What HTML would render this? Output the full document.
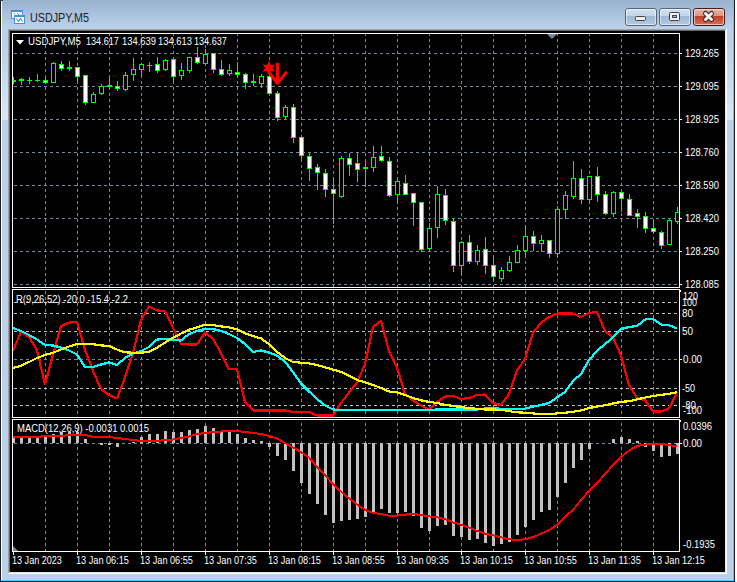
<!DOCTYPE html><html><head><meta charset="utf-8"><title>USDJPY,M5</title><style>html,body{margin:0;padding:0;background:#fff;width:737px;height:582px;overflow:hidden;font-family:"Liberation Sans",sans-serif}</style></head><body><svg width="737" height="582" viewBox="0 0 737 582" shape-rendering="crispEdges" style="position:absolute;left:0;top:0"><defs><linearGradient id="tb" x1="0" y1="0" x2="0" y2="1"><stop offset="0" stop-color="#98b1ce"/><stop offset="1" stop-color="#bcd3eb"/></linearGradient><linearGradient id="btnB" x1="0" y1="0" x2="0" y2="1"><stop offset="0" stop-color="#d3e1f1"/><stop offset="0.45" stop-color="#c2d5ea"/><stop offset="0.46" stop-color="#9fb7d2"/><stop offset="1" stop-color="#b5cbe3"/></linearGradient><linearGradient id="btnR" x1="0" y1="0" x2="0" y2="1"><stop offset="0" stop-color="#eab3a6"/><stop offset="0.45" stop-color="#dc9585"/><stop offset="0.46" stop-color="#bd4127"/><stop offset="1" stop-color="#d5735c"/></linearGradient><linearGradient id="refl" x1="0" y1="0" x2="0" y2="1"><stop offset="0" stop-color="#b9d1ea"/><stop offset="1" stop-color="#dbe7f4"/></linearGradient></defs><rect x="0" y="0" width="737" height="582" fill="#ffffff"/><rect x="0" y="0" width="735" height="582" fill="#1f1f1f"/><rect x="1" y="0" width="733" height="581" fill="#ffffff"/><rect x="733" y="0" width="1" height="581" fill="#3fd6f7"/><rect x="1" y="580" width="733" height="1" fill="#3fd6f7"/><rect x="2" y="0" width="731" height="580" fill="#b9d1ea"/><rect x="2" y="0" width="731" height="29" fill="url(#tb)"/><rect x="0" y="0" width="3" height="1" fill="#3a3a3a"/><rect x="2" y="45" width="6" height="75" fill="url(#refl)"/><rect x="727" y="45" width="6" height="75" fill="url(#refl)"/><rect x="8" y="29" width="719" height="545" fill="#ffffff"/><rect x="8" y="29" width="718" height="544" fill="#a0a0a0"/><rect x="9" y="30" width="717" height="543" fill="#e3e3e3"/><rect x="9" y="30" width="716" height="542" fill="#696969"/><rect x="10" y="31" width="715" height="541" fill="#000000"/><g><rect x="12" y="12" width="10" height="6" fill="#fffff4"/><rect x="20" y="11" width="1" height="1" fill="#3f9a86"/><rect x="21" y="10" width="1" height="1" fill="#3f9a86"/><rect x="22" y="11" width="1" height="1" fill="#3f9a86"/><rect x="12" y="10" width="1" height="1" fill="#4d90f5"/><rect x="22" y="14" width="1" height="1" fill="#4d90f5"/><rect x="14" y="10" width="1" height="1" fill="#4d90f5"/><rect x="22" y="17" width="1" height="1" fill="#3f9a86"/><rect x="19" y="18" width="1" height="1" fill="#3f9a86"/><rect x="17" y="18" width="1" height="1" fill="#3f9a86"/><rect x="11" y="14" width="1" height="1" fill="#3f9a86"/><rect x="13" y="11" width="1" height="1" fill="#4d90f5"/><rect x="11" y="11" width="1" height="1" fill="#4d90f5"/><rect x="11" y="17" width="1" height="1" fill="#4d90f5"/><rect x="15" y="11" width="1" height="1" fill="#4d90f5"/><rect x="16" y="10" width="1" height="1" fill="#4d90f5"/><rect x="18" y="10" width="1" height="1" fill="#4d90f5"/><rect x="20" y="10" width="1" height="1" fill="#4d90f5"/><rect x="22" y="13" width="1" height="1" fill="#3f9a86"/><rect x="22" y="10" width="1" height="1" fill="#4d90f5"/><rect x="22" y="16" width="1" height="1" fill="#4d90f5"/><rect x="21" y="18" width="1" height="1" fill="#3f9a86"/><rect x="14" y="18" width="1" height="1" fill="#4d90f5"/><rect x="17" y="11" width="1" height="1" fill="#4d90f5"/><rect x="12" y="18" width="1" height="1" fill="#4d90f5"/><rect x="19" y="11" width="1" height="1" fill="#4d90f5"/><rect x="11" y="10" width="1" height="1" fill="#3f9a86"/><rect x="11" y="16" width="1" height="1" fill="#3f9a86"/><rect x="11" y="13" width="1" height="1" fill="#4d90f5"/><rect x="13" y="10" width="1" height="1" fill="#3f9a86"/><rect x="15" y="10" width="1" height="1" fill="#3f9a86"/><rect x="18" y="18" width="1" height="1" fill="#4d90f5"/><rect x="16" y="18" width="1" height="1" fill="#4d90f5"/><rect x="12" y="11" width="1" height="1" fill="#3f9a86"/><rect x="20" y="18" width="1" height="1" fill="#4d90f5"/><rect x="21" y="11" width="1" height="1" fill="#4d90f5"/><rect x="14" y="11" width="1" height="1" fill="#3f9a86"/><rect x="22" y="18" width="1" height="1" fill="#4d90f5"/><rect x="22" y="12" width="1" height="1" fill="#4d90f5"/><rect x="22" y="15" width="1" height="1" fill="#3f9a86"/><rect x="17" y="10" width="1" height="1" fill="#3f9a86"/><rect x="19" y="10" width="1" height="1" fill="#3f9a86"/><rect x="11" y="12" width="1" height="1" fill="#3f9a86"/><rect x="11" y="15" width="1" height="1" fill="#4d90f5"/><rect x="13" y="18" width="1" height="1" fill="#3f9a86"/><rect x="11" y="18" width="1" height="1" fill="#3f9a86"/><rect x="18" y="11" width="1" height="1" fill="#3f9a86"/><rect x="15" y="18" width="1" height="1" fill="#3f9a86"/><rect x="16" y="11" width="1" height="1" fill="#3f9a86"/><path d="M13.5 14.5l1-1 1 1M17.5 13.5l1 1 1 1" stroke="#4d90f5" stroke-width="1" fill="none"/><rect x="15" y="17" width="9" height="6" fill="#fffff4"/><rect x="18" y="23" width="1" height="1" fill="#3f9a86"/><rect x="21" y="16" width="1" height="1" fill="#3f9a86"/><rect x="23" y="16" width="1" height="1" fill="#3f9a86"/><rect x="20" y="23" width="1" height="1" fill="#3f9a86"/><rect x="14" y="16" width="1" height="1" fill="#4d90f5"/><rect x="22" y="23" width="1" height="1" fill="#3f9a86"/><rect x="14" y="19" width="1" height="1" fill="#3f9a86"/><rect x="17" y="15" width="1" height="1" fill="#4d90f5"/><rect x="14" y="22" width="1" height="1" fill="#4d90f5"/><rect x="19" y="15" width="1" height="1" fill="#4d90f5"/><rect x="16" y="16" width="1" height="1" fill="#4d90f5"/><rect x="24" y="23" width="1" height="1" fill="#3f9a86"/><rect x="24" y="17" width="1" height="1" fill="#3f9a86"/><rect x="24" y="20" width="1" height="1" fill="#4d90f5"/><rect x="18" y="16" width="1" height="1" fill="#4d90f5"/><rect x="15" y="23" width="1" height="1" fill="#4d90f5"/><rect x="20" y="16" width="1" height="1" fill="#4d90f5"/><rect x="21" y="15" width="1" height="1" fill="#4d90f5"/><rect x="22" y="16" width="1" height="1" fill="#4d90f5"/><rect x="23" y="15" width="1" height="1" fill="#4d90f5"/><rect x="14" y="18" width="1" height="1" fill="#4d90f5"/><rect x="14" y="15" width="1" height="1" fill="#3f9a86"/><rect x="14" y="21" width="1" height="1" fill="#3f9a86"/><rect x="17" y="23" width="1" height="1" fill="#4d90f5"/><rect x="19" y="23" width="1" height="1" fill="#4d90f5"/><rect x="24" y="16" width="1" height="1" fill="#4d90f5"/><rect x="24" y="19" width="1" height="1" fill="#3f9a86"/><rect x="15" y="16" width="1" height="1" fill="#3f9a86"/><rect x="16" y="15" width="1" height="1" fill="#3f9a86"/><rect x="24" y="22" width="1" height="1" fill="#4d90f5"/><rect x="15" y="15" width="1" height="1" fill="#4d90f5"/><rect x="18" y="15" width="1" height="1" fill="#3f9a86"/><rect x="20" y="15" width="1" height="1" fill="#3f9a86"/><rect x="21" y="23" width="1" height="1" fill="#4d90f5"/><rect x="22" y="15" width="1" height="1" fill="#3f9a86"/><rect x="23" y="23" width="1" height="1" fill="#4d90f5"/><rect x="14" y="17" width="1" height="1" fill="#3f9a86"/><rect x="14" y="23" width="1" height="1" fill="#3f9a86"/><rect x="17" y="16" width="1" height="1" fill="#3f9a86"/><rect x="14" y="20" width="1" height="1" fill="#4d90f5"/><rect x="19" y="16" width="1" height="1" fill="#3f9a86"/><rect x="24" y="18" width="1" height="1" fill="#4d90f5"/><rect x="24" y="15" width="1" height="1" fill="#3f9a86"/><rect x="24" y="21" width="1" height="1" fill="#3f9a86"/><rect x="16" y="23" width="1" height="1" fill="#3f9a86"/><path d="M16.5 18.5l2 3 2-3 2 3" stroke="#4d90f5" stroke-width="1.2" fill="none" shape-rendering="auto"/></g><text x="30" y="22" font-family="Liberation Sans, sans-serif" font-size="12" fill="#1e1e1e" textLength="59" lengthAdjust="spacingAndGlyphs" shape-rendering="auto">USDJPY,M5</text><rect x="625.5" y="8.5" width="31" height="17" rx="2.5" ry="2.5" fill="url(#btnB)" stroke="#56647a" stroke-width="1" shape-rendering="auto"/><rect x="626.5" y="9.5" width="29" height="15" rx="1.5" ry="1.5" fill="none" stroke="rgba(255,255,255,0.55)" stroke-width="1" shape-rendering="auto"/><rect x="635.5" y="16.5" width="10" height="4" rx="1" fill="#f0f0f0" stroke="#3b4250" shape-rendering="auto"/><rect x="659.5" y="8.5" width="31" height="17" rx="2.5" ry="2.5" fill="url(#btnB)" stroke="#56647a" stroke-width="1" shape-rendering="auto"/><rect x="660.5" y="9.5" width="29" height="15" rx="1.5" ry="1.5" fill="none" stroke="rgba(255,255,255,0.55)" stroke-width="1" shape-rendering="auto"/><rect x="669.5" y="12.5" width="10" height="8" rx="1" fill="#f0f0f0" stroke="#3b4250" shape-rendering="auto"/><rect x="672.5" y="15.5" width="4" height="2" fill="#9fb7d2" stroke="#3b4250" shape-rendering="auto"/><rect x="693.5" y="8.5" width="31" height="17" rx="2.5" ry="2.5" fill="url(#btnR)" stroke="#4b1818" stroke-width="1" shape-rendering="auto"/><rect x="694.5" y="9.5" width="29" height="15" rx="1.5" ry="1.5" fill="none" stroke="rgba(255,255,255,0.55)" stroke-width="1" shape-rendering="auto"/><path d="M705.5 13.5L711.5 19.5M711.5 13.5L705.5 19.5" stroke="#3a2626" stroke-width="5" fill="none" stroke-linecap="round" shape-rendering="auto"/><path d="M705.5 13.5L711.5 19.5M711.5 13.5L705.5 19.5" stroke="#f4f4f4" stroke-width="3" fill="none" stroke-linecap="round" shape-rendering="auto"/><path fill="#778899" d="M14 53h3v1h-3zM20 53h3v1h-3zM26 53h3v1h-3zM32 53h3v1h-3zM38 53h3v1h-3zM44 53h3v1h-3zM50 53h3v1h-3zM56 53h3v1h-3zM62 53h3v1h-3zM68 53h3v1h-3zM74 53h3v1h-3zM80 53h3v1h-3zM86 53h3v1h-3zM92 53h3v1h-3zM98 53h3v1h-3zM104 53h3v1h-3zM110 53h3v1h-3zM116 53h3v1h-3zM122 53h3v1h-3zM128 53h3v1h-3zM134 53h3v1h-3zM140 53h3v1h-3zM146 53h3v1h-3zM152 53h3v1h-3zM158 53h3v1h-3zM164 53h3v1h-3zM170 53h3v1h-3zM176 53h3v1h-3zM182 53h3v1h-3zM188 53h3v1h-3zM194 53h3v1h-3zM200 53h3v1h-3zM206 53h3v1h-3zM212 53h3v1h-3zM218 53h3v1h-3zM224 53h3v1h-3zM230 53h3v1h-3zM236 53h3v1h-3zM242 53h3v1h-3zM248 53h3v1h-3zM254 53h3v1h-3zM260 53h3v1h-3zM266 53h3v1h-3zM272 53h3v1h-3zM278 53h3v1h-3zM284 53h3v1h-3zM290 53h3v1h-3zM296 53h3v1h-3zM302 53h3v1h-3zM308 53h3v1h-3zM314 53h3v1h-3zM320 53h3v1h-3zM326 53h3v1h-3zM332 53h3v1h-3zM338 53h3v1h-3zM344 53h3v1h-3zM350 53h3v1h-3zM356 53h3v1h-3zM362 53h3v1h-3zM368 53h3v1h-3zM374 53h3v1h-3zM380 53h3v1h-3zM386 53h3v1h-3zM392 53h3v1h-3zM398 53h3v1h-3zM404 53h3v1h-3zM410 53h3v1h-3zM416 53h3v1h-3zM422 53h3v1h-3zM428 53h3v1h-3zM434 53h3v1h-3zM440 53h3v1h-3zM446 53h3v1h-3zM452 53h3v1h-3zM458 53h3v1h-3zM464 53h3v1h-3zM470 53h3v1h-3zM476 53h3v1h-3zM482 53h3v1h-3zM488 53h3v1h-3zM494 53h3v1h-3zM500 53h3v1h-3zM506 53h3v1h-3zM512 53h3v1h-3zM518 53h3v1h-3zM524 53h3v1h-3zM530 53h3v1h-3zM536 53h3v1h-3zM542 53h3v1h-3zM548 53h3v1h-3zM554 53h3v1h-3zM560 53h3v1h-3zM566 53h3v1h-3zM572 53h3v1h-3zM578 53h3v1h-3zM584 53h3v1h-3zM590 53h3v1h-3zM596 53h3v1h-3zM602 53h3v1h-3zM608 53h3v1h-3zM614 53h3v1h-3zM620 53h3v1h-3zM626 53h3v1h-3zM632 53h3v1h-3zM638 53h3v1h-3zM644 53h3v1h-3zM650 53h3v1h-3zM656 53h3v1h-3zM662 53h3v1h-3zM668 53h3v1h-3zM674 53h3v1h-3z"/><path fill="#778899" d="M14 86h3v1h-3zM20 86h3v1h-3zM26 86h3v1h-3zM32 86h3v1h-3zM38 86h3v1h-3zM44 86h3v1h-3zM50 86h3v1h-3zM56 86h3v1h-3zM62 86h3v1h-3zM68 86h3v1h-3zM74 86h3v1h-3zM80 86h3v1h-3zM86 86h3v1h-3zM92 86h3v1h-3zM98 86h3v1h-3zM104 86h3v1h-3zM110 86h3v1h-3zM116 86h3v1h-3zM122 86h3v1h-3zM128 86h3v1h-3zM134 86h3v1h-3zM140 86h3v1h-3zM146 86h3v1h-3zM152 86h3v1h-3zM158 86h3v1h-3zM164 86h3v1h-3zM170 86h3v1h-3zM176 86h3v1h-3zM182 86h3v1h-3zM188 86h3v1h-3zM194 86h3v1h-3zM200 86h3v1h-3zM206 86h3v1h-3zM212 86h3v1h-3zM218 86h3v1h-3zM224 86h3v1h-3zM230 86h3v1h-3zM236 86h3v1h-3zM242 86h3v1h-3zM248 86h3v1h-3zM254 86h3v1h-3zM260 86h3v1h-3zM266 86h3v1h-3zM272 86h3v1h-3zM278 86h3v1h-3zM284 86h3v1h-3zM290 86h3v1h-3zM296 86h3v1h-3zM302 86h3v1h-3zM308 86h3v1h-3zM314 86h3v1h-3zM320 86h3v1h-3zM326 86h3v1h-3zM332 86h3v1h-3zM338 86h3v1h-3zM344 86h3v1h-3zM350 86h3v1h-3zM356 86h3v1h-3zM362 86h3v1h-3zM368 86h3v1h-3zM374 86h3v1h-3zM380 86h3v1h-3zM386 86h3v1h-3zM392 86h3v1h-3zM398 86h3v1h-3zM404 86h3v1h-3zM410 86h3v1h-3zM416 86h3v1h-3zM422 86h3v1h-3zM428 86h3v1h-3zM434 86h3v1h-3zM440 86h3v1h-3zM446 86h3v1h-3zM452 86h3v1h-3zM458 86h3v1h-3zM464 86h3v1h-3zM470 86h3v1h-3zM476 86h3v1h-3zM482 86h3v1h-3zM488 86h3v1h-3zM494 86h3v1h-3zM500 86h3v1h-3zM506 86h3v1h-3zM512 86h3v1h-3zM518 86h3v1h-3zM524 86h3v1h-3zM530 86h3v1h-3zM536 86h3v1h-3zM542 86h3v1h-3zM548 86h3v1h-3zM554 86h3v1h-3zM560 86h3v1h-3zM566 86h3v1h-3zM572 86h3v1h-3zM578 86h3v1h-3zM584 86h3v1h-3zM590 86h3v1h-3zM596 86h3v1h-3zM602 86h3v1h-3zM608 86h3v1h-3zM614 86h3v1h-3zM620 86h3v1h-3zM626 86h3v1h-3zM632 86h3v1h-3zM638 86h3v1h-3zM644 86h3v1h-3zM650 86h3v1h-3zM656 86h3v1h-3zM662 86h3v1h-3zM668 86h3v1h-3zM674 86h3v1h-3z"/><path fill="#778899" d="M14 119h3v1h-3zM20 119h3v1h-3zM26 119h3v1h-3zM32 119h3v1h-3zM38 119h3v1h-3zM44 119h3v1h-3zM50 119h3v1h-3zM56 119h3v1h-3zM62 119h3v1h-3zM68 119h3v1h-3zM74 119h3v1h-3zM80 119h3v1h-3zM86 119h3v1h-3zM92 119h3v1h-3zM98 119h3v1h-3zM104 119h3v1h-3zM110 119h3v1h-3zM116 119h3v1h-3zM122 119h3v1h-3zM128 119h3v1h-3zM134 119h3v1h-3zM140 119h3v1h-3zM146 119h3v1h-3zM152 119h3v1h-3zM158 119h3v1h-3zM164 119h3v1h-3zM170 119h3v1h-3zM176 119h3v1h-3zM182 119h3v1h-3zM188 119h3v1h-3zM194 119h3v1h-3zM200 119h3v1h-3zM206 119h3v1h-3zM212 119h3v1h-3zM218 119h3v1h-3zM224 119h3v1h-3zM230 119h3v1h-3zM236 119h3v1h-3zM242 119h3v1h-3zM248 119h3v1h-3zM254 119h3v1h-3zM260 119h3v1h-3zM266 119h3v1h-3zM272 119h3v1h-3zM278 119h3v1h-3zM284 119h3v1h-3zM290 119h3v1h-3zM296 119h3v1h-3zM302 119h3v1h-3zM308 119h3v1h-3zM314 119h3v1h-3zM320 119h3v1h-3zM326 119h3v1h-3zM332 119h3v1h-3zM338 119h3v1h-3zM344 119h3v1h-3zM350 119h3v1h-3zM356 119h3v1h-3zM362 119h3v1h-3zM368 119h3v1h-3zM374 119h3v1h-3zM380 119h3v1h-3zM386 119h3v1h-3zM392 119h3v1h-3zM398 119h3v1h-3zM404 119h3v1h-3zM410 119h3v1h-3zM416 119h3v1h-3zM422 119h3v1h-3zM428 119h3v1h-3zM434 119h3v1h-3zM440 119h3v1h-3zM446 119h3v1h-3zM452 119h3v1h-3zM458 119h3v1h-3zM464 119h3v1h-3zM470 119h3v1h-3zM476 119h3v1h-3zM482 119h3v1h-3zM488 119h3v1h-3zM494 119h3v1h-3zM500 119h3v1h-3zM506 119h3v1h-3zM512 119h3v1h-3zM518 119h3v1h-3zM524 119h3v1h-3zM530 119h3v1h-3zM536 119h3v1h-3zM542 119h3v1h-3zM548 119h3v1h-3zM554 119h3v1h-3zM560 119h3v1h-3zM566 119h3v1h-3zM572 119h3v1h-3zM578 119h3v1h-3zM584 119h3v1h-3zM590 119h3v1h-3zM596 119h3v1h-3zM602 119h3v1h-3zM608 119h3v1h-3zM614 119h3v1h-3zM620 119h3v1h-3zM626 119h3v1h-3zM632 119h3v1h-3zM638 119h3v1h-3zM644 119h3v1h-3zM650 119h3v1h-3zM656 119h3v1h-3zM662 119h3v1h-3zM668 119h3v1h-3zM674 119h3v1h-3z"/><path fill="#778899" d="M14 152h3v1h-3zM20 152h3v1h-3zM26 152h3v1h-3zM32 152h3v1h-3zM38 152h3v1h-3zM44 152h3v1h-3zM50 152h3v1h-3zM56 152h3v1h-3zM62 152h3v1h-3zM68 152h3v1h-3zM74 152h3v1h-3zM80 152h3v1h-3zM86 152h3v1h-3zM92 152h3v1h-3zM98 152h3v1h-3zM104 152h3v1h-3zM110 152h3v1h-3zM116 152h3v1h-3zM122 152h3v1h-3zM128 152h3v1h-3zM134 152h3v1h-3zM140 152h3v1h-3zM146 152h3v1h-3zM152 152h3v1h-3zM158 152h3v1h-3zM164 152h3v1h-3zM170 152h3v1h-3zM176 152h3v1h-3zM182 152h3v1h-3zM188 152h3v1h-3zM194 152h3v1h-3zM200 152h3v1h-3zM206 152h3v1h-3zM212 152h3v1h-3zM218 152h3v1h-3zM224 152h3v1h-3zM230 152h3v1h-3zM236 152h3v1h-3zM242 152h3v1h-3zM248 152h3v1h-3zM254 152h3v1h-3zM260 152h3v1h-3zM266 152h3v1h-3zM272 152h3v1h-3zM278 152h3v1h-3zM284 152h3v1h-3zM290 152h3v1h-3zM296 152h3v1h-3zM302 152h3v1h-3zM308 152h3v1h-3zM314 152h3v1h-3zM320 152h3v1h-3zM326 152h3v1h-3zM332 152h3v1h-3zM338 152h3v1h-3zM344 152h3v1h-3zM350 152h3v1h-3zM356 152h3v1h-3zM362 152h3v1h-3zM368 152h3v1h-3zM374 152h3v1h-3zM380 152h3v1h-3zM386 152h3v1h-3zM392 152h3v1h-3zM398 152h3v1h-3zM404 152h3v1h-3zM410 152h3v1h-3zM416 152h3v1h-3zM422 152h3v1h-3zM428 152h3v1h-3zM434 152h3v1h-3zM440 152h3v1h-3zM446 152h3v1h-3zM452 152h3v1h-3zM458 152h3v1h-3zM464 152h3v1h-3zM470 152h3v1h-3zM476 152h3v1h-3zM482 152h3v1h-3zM488 152h3v1h-3zM494 152h3v1h-3zM500 152h3v1h-3zM506 152h3v1h-3zM512 152h3v1h-3zM518 152h3v1h-3zM524 152h3v1h-3zM530 152h3v1h-3zM536 152h3v1h-3zM542 152h3v1h-3zM548 152h3v1h-3zM554 152h3v1h-3zM560 152h3v1h-3zM566 152h3v1h-3zM572 152h3v1h-3zM578 152h3v1h-3zM584 152h3v1h-3zM590 152h3v1h-3zM596 152h3v1h-3zM602 152h3v1h-3zM608 152h3v1h-3zM614 152h3v1h-3zM620 152h3v1h-3zM626 152h3v1h-3zM632 152h3v1h-3zM638 152h3v1h-3zM644 152h3v1h-3zM650 152h3v1h-3zM656 152h3v1h-3zM662 152h3v1h-3zM668 152h3v1h-3zM674 152h3v1h-3z"/><path fill="#778899" d="M14 185h3v1h-3zM20 185h3v1h-3zM26 185h3v1h-3zM32 185h3v1h-3zM38 185h3v1h-3zM44 185h3v1h-3zM50 185h3v1h-3zM56 185h3v1h-3zM62 185h3v1h-3zM68 185h3v1h-3zM74 185h3v1h-3zM80 185h3v1h-3zM86 185h3v1h-3zM92 185h3v1h-3zM98 185h3v1h-3zM104 185h3v1h-3zM110 185h3v1h-3zM116 185h3v1h-3zM122 185h3v1h-3zM128 185h3v1h-3zM134 185h3v1h-3zM140 185h3v1h-3zM146 185h3v1h-3zM152 185h3v1h-3zM158 185h3v1h-3zM164 185h3v1h-3zM170 185h3v1h-3zM176 185h3v1h-3zM182 185h3v1h-3zM188 185h3v1h-3zM194 185h3v1h-3zM200 185h3v1h-3zM206 185h3v1h-3zM212 185h3v1h-3zM218 185h3v1h-3zM224 185h3v1h-3zM230 185h3v1h-3zM236 185h3v1h-3zM242 185h3v1h-3zM248 185h3v1h-3zM254 185h3v1h-3zM260 185h3v1h-3zM266 185h3v1h-3zM272 185h3v1h-3zM278 185h3v1h-3zM284 185h3v1h-3zM290 185h3v1h-3zM296 185h3v1h-3zM302 185h3v1h-3zM308 185h3v1h-3zM314 185h3v1h-3zM320 185h3v1h-3zM326 185h3v1h-3zM332 185h3v1h-3zM338 185h3v1h-3zM344 185h3v1h-3zM350 185h3v1h-3zM356 185h3v1h-3zM362 185h3v1h-3zM368 185h3v1h-3zM374 185h3v1h-3zM380 185h3v1h-3zM386 185h3v1h-3zM392 185h3v1h-3zM398 185h3v1h-3zM404 185h3v1h-3zM410 185h3v1h-3zM416 185h3v1h-3zM422 185h3v1h-3zM428 185h3v1h-3zM434 185h3v1h-3zM440 185h3v1h-3zM446 185h3v1h-3zM452 185h3v1h-3zM458 185h3v1h-3zM464 185h3v1h-3zM470 185h3v1h-3zM476 185h3v1h-3zM482 185h3v1h-3zM488 185h3v1h-3zM494 185h3v1h-3zM500 185h3v1h-3zM506 185h3v1h-3zM512 185h3v1h-3zM518 185h3v1h-3zM524 185h3v1h-3zM530 185h3v1h-3zM536 185h3v1h-3zM542 185h3v1h-3zM548 185h3v1h-3zM554 185h3v1h-3zM560 185h3v1h-3zM566 185h3v1h-3zM572 185h3v1h-3zM578 185h3v1h-3zM584 185h3v1h-3zM590 185h3v1h-3zM596 185h3v1h-3zM602 185h3v1h-3zM608 185h3v1h-3zM614 185h3v1h-3zM620 185h3v1h-3zM626 185h3v1h-3zM632 185h3v1h-3zM638 185h3v1h-3zM644 185h3v1h-3zM650 185h3v1h-3zM656 185h3v1h-3zM662 185h3v1h-3zM668 185h3v1h-3zM674 185h3v1h-3z"/><path fill="#778899" d="M14 218h3v1h-3zM20 218h3v1h-3zM26 218h3v1h-3zM32 218h3v1h-3zM38 218h3v1h-3zM44 218h3v1h-3zM50 218h3v1h-3zM56 218h3v1h-3zM62 218h3v1h-3zM68 218h3v1h-3zM74 218h3v1h-3zM80 218h3v1h-3zM86 218h3v1h-3zM92 218h3v1h-3zM98 218h3v1h-3zM104 218h3v1h-3zM110 218h3v1h-3zM116 218h3v1h-3zM122 218h3v1h-3zM128 218h3v1h-3zM134 218h3v1h-3zM140 218h3v1h-3zM146 218h3v1h-3zM152 218h3v1h-3zM158 218h3v1h-3zM164 218h3v1h-3zM170 218h3v1h-3zM176 218h3v1h-3zM182 218h3v1h-3zM188 218h3v1h-3zM194 218h3v1h-3zM200 218h3v1h-3zM206 218h3v1h-3zM212 218h3v1h-3zM218 218h3v1h-3zM224 218h3v1h-3zM230 218h3v1h-3zM236 218h3v1h-3zM242 218h3v1h-3zM248 218h3v1h-3zM254 218h3v1h-3zM260 218h3v1h-3zM266 218h3v1h-3zM272 218h3v1h-3zM278 218h3v1h-3zM284 218h3v1h-3zM290 218h3v1h-3zM296 218h3v1h-3zM302 218h3v1h-3zM308 218h3v1h-3zM314 218h3v1h-3zM320 218h3v1h-3zM326 218h3v1h-3zM332 218h3v1h-3zM338 218h3v1h-3zM344 218h3v1h-3zM350 218h3v1h-3zM356 218h3v1h-3zM362 218h3v1h-3zM368 218h3v1h-3zM374 218h3v1h-3zM380 218h3v1h-3zM386 218h3v1h-3zM392 218h3v1h-3zM398 218h3v1h-3zM404 218h3v1h-3zM410 218h3v1h-3zM416 218h3v1h-3zM422 218h3v1h-3zM428 218h3v1h-3zM434 218h3v1h-3zM440 218h3v1h-3zM446 218h3v1h-3zM452 218h3v1h-3zM458 218h3v1h-3zM464 218h3v1h-3zM470 218h3v1h-3zM476 218h3v1h-3zM482 218h3v1h-3zM488 218h3v1h-3zM494 218h3v1h-3zM500 218h3v1h-3zM506 218h3v1h-3zM512 218h3v1h-3zM518 218h3v1h-3zM524 218h3v1h-3zM530 218h3v1h-3zM536 218h3v1h-3zM542 218h3v1h-3zM548 218h3v1h-3zM554 218h3v1h-3zM560 218h3v1h-3zM566 218h3v1h-3zM572 218h3v1h-3zM578 218h3v1h-3zM584 218h3v1h-3zM590 218h3v1h-3zM596 218h3v1h-3zM602 218h3v1h-3zM608 218h3v1h-3zM614 218h3v1h-3zM620 218h3v1h-3zM626 218h3v1h-3zM632 218h3v1h-3zM638 218h3v1h-3zM644 218h3v1h-3zM650 218h3v1h-3zM656 218h3v1h-3zM662 218h3v1h-3zM668 218h3v1h-3zM674 218h3v1h-3z"/><path fill="#778899" d="M14 251h3v1h-3zM20 251h3v1h-3zM26 251h3v1h-3zM32 251h3v1h-3zM38 251h3v1h-3zM44 251h3v1h-3zM50 251h3v1h-3zM56 251h3v1h-3zM62 251h3v1h-3zM68 251h3v1h-3zM74 251h3v1h-3zM80 251h3v1h-3zM86 251h3v1h-3zM92 251h3v1h-3zM98 251h3v1h-3zM104 251h3v1h-3zM110 251h3v1h-3zM116 251h3v1h-3zM122 251h3v1h-3zM128 251h3v1h-3zM134 251h3v1h-3zM140 251h3v1h-3zM146 251h3v1h-3zM152 251h3v1h-3zM158 251h3v1h-3zM164 251h3v1h-3zM170 251h3v1h-3zM176 251h3v1h-3zM182 251h3v1h-3zM188 251h3v1h-3zM194 251h3v1h-3zM200 251h3v1h-3zM206 251h3v1h-3zM212 251h3v1h-3zM218 251h3v1h-3zM224 251h3v1h-3zM230 251h3v1h-3zM236 251h3v1h-3zM242 251h3v1h-3zM248 251h3v1h-3zM254 251h3v1h-3zM260 251h3v1h-3zM266 251h3v1h-3zM272 251h3v1h-3zM278 251h3v1h-3zM284 251h3v1h-3zM290 251h3v1h-3zM296 251h3v1h-3zM302 251h3v1h-3zM308 251h3v1h-3zM314 251h3v1h-3zM320 251h3v1h-3zM326 251h3v1h-3zM332 251h3v1h-3zM338 251h3v1h-3zM344 251h3v1h-3zM350 251h3v1h-3zM356 251h3v1h-3zM362 251h3v1h-3zM368 251h3v1h-3zM374 251h3v1h-3zM380 251h3v1h-3zM386 251h3v1h-3zM392 251h3v1h-3zM398 251h3v1h-3zM404 251h3v1h-3zM410 251h3v1h-3zM416 251h3v1h-3zM422 251h3v1h-3zM428 251h3v1h-3zM434 251h3v1h-3zM440 251h3v1h-3zM446 251h3v1h-3zM452 251h3v1h-3zM458 251h3v1h-3zM464 251h3v1h-3zM470 251h3v1h-3zM476 251h3v1h-3zM482 251h3v1h-3zM488 251h3v1h-3zM494 251h3v1h-3zM500 251h3v1h-3zM506 251h3v1h-3zM512 251h3v1h-3zM518 251h3v1h-3zM524 251h3v1h-3zM530 251h3v1h-3zM536 251h3v1h-3zM542 251h3v1h-3zM548 251h3v1h-3zM554 251h3v1h-3zM560 251h3v1h-3zM566 251h3v1h-3zM572 251h3v1h-3zM578 251h3v1h-3zM584 251h3v1h-3zM590 251h3v1h-3zM596 251h3v1h-3zM602 251h3v1h-3zM608 251h3v1h-3zM614 251h3v1h-3zM620 251h3v1h-3zM626 251h3v1h-3zM632 251h3v1h-3zM638 251h3v1h-3zM644 251h3v1h-3zM650 251h3v1h-3zM656 251h3v1h-3zM662 251h3v1h-3zM668 251h3v1h-3zM674 251h3v1h-3z"/><path fill="#778899" d="M14 284h3v1h-3zM20 284h3v1h-3zM26 284h3v1h-3zM32 284h3v1h-3zM38 284h3v1h-3zM44 284h3v1h-3zM50 284h3v1h-3zM56 284h3v1h-3zM62 284h3v1h-3zM68 284h3v1h-3zM74 284h3v1h-3zM80 284h3v1h-3zM86 284h3v1h-3zM92 284h3v1h-3zM98 284h3v1h-3zM104 284h3v1h-3zM110 284h3v1h-3zM116 284h3v1h-3zM122 284h3v1h-3zM128 284h3v1h-3zM134 284h3v1h-3zM140 284h3v1h-3zM146 284h3v1h-3zM152 284h3v1h-3zM158 284h3v1h-3zM164 284h3v1h-3zM170 284h3v1h-3zM176 284h3v1h-3zM182 284h3v1h-3zM188 284h3v1h-3zM194 284h3v1h-3zM200 284h3v1h-3zM206 284h3v1h-3zM212 284h3v1h-3zM218 284h3v1h-3zM224 284h3v1h-3zM230 284h3v1h-3zM236 284h3v1h-3zM242 284h3v1h-3zM248 284h3v1h-3zM254 284h3v1h-3zM260 284h3v1h-3zM266 284h3v1h-3zM272 284h3v1h-3zM278 284h3v1h-3zM284 284h3v1h-3zM290 284h3v1h-3zM296 284h3v1h-3zM302 284h3v1h-3zM308 284h3v1h-3zM314 284h3v1h-3zM320 284h3v1h-3zM326 284h3v1h-3zM332 284h3v1h-3zM338 284h3v1h-3zM344 284h3v1h-3zM350 284h3v1h-3zM356 284h3v1h-3zM362 284h3v1h-3zM368 284h3v1h-3zM374 284h3v1h-3zM380 284h3v1h-3zM386 284h3v1h-3zM392 284h3v1h-3zM398 284h3v1h-3zM404 284h3v1h-3zM410 284h3v1h-3zM416 284h3v1h-3zM422 284h3v1h-3zM428 284h3v1h-3zM434 284h3v1h-3zM440 284h3v1h-3zM446 284h3v1h-3zM452 284h3v1h-3zM458 284h3v1h-3zM464 284h3v1h-3zM470 284h3v1h-3zM476 284h3v1h-3zM482 284h3v1h-3zM488 284h3v1h-3zM494 284h3v1h-3zM500 284h3v1h-3zM506 284h3v1h-3zM512 284h3v1h-3zM518 284h3v1h-3zM524 284h3v1h-3zM530 284h3v1h-3zM536 284h3v1h-3zM542 284h3v1h-3zM548 284h3v1h-3zM554 284h3v1h-3zM560 284h3v1h-3zM566 284h3v1h-3zM572 284h3v1h-3zM578 284h3v1h-3zM584 284h3v1h-3zM590 284h3v1h-3zM596 284h3v1h-3zM602 284h3v1h-3zM608 284h3v1h-3zM614 284h3v1h-3zM620 284h3v1h-3zM626 284h3v1h-3zM632 284h3v1h-3zM638 284h3v1h-3zM644 284h3v1h-3zM650 284h3v1h-3zM656 284h3v1h-3zM662 284h3v1h-3zM668 284h3v1h-3zM674 284h3v1h-3z"/><path fill="#778899" d="M45 34h1v2h-1zM45 39h1v3h-1zM45 45h1v3h-1zM45 51h1v3h-1zM45 57h1v3h-1zM45 63h1v3h-1zM45 69h1v3h-1zM45 75h1v3h-1zM45 81h1v3h-1zM45 87h1v3h-1zM45 93h1v3h-1zM45 99h1v3h-1zM45 105h1v3h-1zM45 111h1v3h-1zM45 117h1v3h-1zM45 123h1v3h-1zM45 129h1v3h-1zM45 135h1v3h-1zM45 141h1v3h-1zM45 147h1v3h-1zM45 153h1v3h-1zM45 159h1v3h-1zM45 165h1v3h-1zM45 171h1v3h-1zM45 177h1v3h-1zM45 183h1v3h-1zM45 189h1v3h-1zM45 195h1v3h-1zM45 201h1v3h-1zM45 207h1v3h-1zM45 213h1v3h-1zM45 219h1v3h-1zM45 225h1v3h-1zM45 231h1v3h-1zM45 237h1v3h-1zM45 243h1v3h-1zM45 249h1v3h-1zM45 255h1v3h-1zM45 261h1v3h-1zM45 267h1v3h-1zM45 273h1v3h-1zM45 279h1v3h-1zM45 285h1v2h-1z"/><path fill="#778899" d="M45 291h1v3h-1zM45 297h1v3h-1zM45 303h1v3h-1zM45 309h1v3h-1zM45 315h1v3h-1zM45 321h1v3h-1zM45 327h1v3h-1zM45 333h1v3h-1zM45 339h1v3h-1zM45 345h1v3h-1zM45 351h1v3h-1zM45 357h1v3h-1zM45 363h1v3h-1zM45 369h1v3h-1zM45 375h1v3h-1zM45 381h1v3h-1zM45 387h1v3h-1zM45 393h1v3h-1zM45 399h1v3h-1zM45 405h1v3h-1zM45 411h1v3h-1z"/><path fill="#778899" d="M45 423h1v3h-1zM45 429h1v3h-1zM45 435h1v3h-1zM45 441h1v3h-1zM45 447h1v3h-1zM45 453h1v3h-1zM45 459h1v3h-1zM45 465h1v3h-1zM45 471h1v3h-1zM45 477h1v3h-1zM45 483h1v3h-1zM45 489h1v3h-1zM45 495h1v3h-1zM45 501h1v3h-1zM45 507h1v3h-1zM45 513h1v3h-1zM45 519h1v3h-1zM45 525h1v3h-1zM45 531h1v3h-1zM45 537h1v3h-1zM45 543h1v3h-1zM45 549h1v2h-1z"/><path fill="#778899" d="M77 34h1v2h-1zM77 39h1v3h-1zM77 45h1v3h-1zM77 51h1v3h-1zM77 57h1v3h-1zM77 63h1v3h-1zM77 69h1v3h-1zM77 75h1v3h-1zM77 81h1v3h-1zM77 87h1v3h-1zM77 93h1v3h-1zM77 99h1v3h-1zM77 105h1v3h-1zM77 111h1v3h-1zM77 117h1v3h-1zM77 123h1v3h-1zM77 129h1v3h-1zM77 135h1v3h-1zM77 141h1v3h-1zM77 147h1v3h-1zM77 153h1v3h-1zM77 159h1v3h-1zM77 165h1v3h-1zM77 171h1v3h-1zM77 177h1v3h-1zM77 183h1v3h-1zM77 189h1v3h-1zM77 195h1v3h-1zM77 201h1v3h-1zM77 207h1v3h-1zM77 213h1v3h-1zM77 219h1v3h-1zM77 225h1v3h-1zM77 231h1v3h-1zM77 237h1v3h-1zM77 243h1v3h-1zM77 249h1v3h-1zM77 255h1v3h-1zM77 261h1v3h-1zM77 267h1v3h-1zM77 273h1v3h-1zM77 279h1v3h-1zM77 285h1v2h-1z"/><path fill="#778899" d="M77 291h1v3h-1zM77 297h1v3h-1zM77 303h1v3h-1zM77 309h1v3h-1zM77 315h1v3h-1zM77 321h1v3h-1zM77 327h1v3h-1zM77 333h1v3h-1zM77 339h1v3h-1zM77 345h1v3h-1zM77 351h1v3h-1zM77 357h1v3h-1zM77 363h1v3h-1zM77 369h1v3h-1zM77 375h1v3h-1zM77 381h1v3h-1zM77 387h1v3h-1zM77 393h1v3h-1zM77 399h1v3h-1zM77 405h1v3h-1zM77 411h1v3h-1z"/><path fill="#778899" d="M77 423h1v3h-1zM77 429h1v3h-1zM77 435h1v3h-1zM77 441h1v3h-1zM77 447h1v3h-1zM77 453h1v3h-1zM77 459h1v3h-1zM77 465h1v3h-1zM77 471h1v3h-1zM77 477h1v3h-1zM77 483h1v3h-1zM77 489h1v3h-1zM77 495h1v3h-1zM77 501h1v3h-1zM77 507h1v3h-1zM77 513h1v3h-1zM77 519h1v3h-1zM77 525h1v3h-1zM77 531h1v3h-1zM77 537h1v3h-1zM77 543h1v3h-1zM77 549h1v2h-1z"/><path fill="#778899" d="M109 34h1v2h-1zM109 39h1v3h-1zM109 45h1v3h-1zM109 51h1v3h-1zM109 57h1v3h-1zM109 63h1v3h-1zM109 69h1v3h-1zM109 75h1v3h-1zM109 81h1v3h-1zM109 87h1v3h-1zM109 93h1v3h-1zM109 99h1v3h-1zM109 105h1v3h-1zM109 111h1v3h-1zM109 117h1v3h-1zM109 123h1v3h-1zM109 129h1v3h-1zM109 135h1v3h-1zM109 141h1v3h-1zM109 147h1v3h-1zM109 153h1v3h-1zM109 159h1v3h-1zM109 165h1v3h-1zM109 171h1v3h-1zM109 177h1v3h-1zM109 183h1v3h-1zM109 189h1v3h-1zM109 195h1v3h-1zM109 201h1v3h-1zM109 207h1v3h-1zM109 213h1v3h-1zM109 219h1v3h-1zM109 225h1v3h-1zM109 231h1v3h-1zM109 237h1v3h-1zM109 243h1v3h-1zM109 249h1v3h-1zM109 255h1v3h-1zM109 261h1v3h-1zM109 267h1v3h-1zM109 273h1v3h-1zM109 279h1v3h-1zM109 285h1v2h-1z"/><path fill="#778899" d="M109 291h1v3h-1zM109 297h1v3h-1zM109 303h1v3h-1zM109 309h1v3h-1zM109 315h1v3h-1zM109 321h1v3h-1zM109 327h1v3h-1zM109 333h1v3h-1zM109 339h1v3h-1zM109 345h1v3h-1zM109 351h1v3h-1zM109 357h1v3h-1zM109 363h1v3h-1zM109 369h1v3h-1zM109 375h1v3h-1zM109 381h1v3h-1zM109 387h1v3h-1zM109 393h1v3h-1zM109 399h1v3h-1zM109 405h1v3h-1zM109 411h1v3h-1z"/><path fill="#778899" d="M109 423h1v3h-1zM109 429h1v3h-1zM109 435h1v3h-1zM109 441h1v3h-1zM109 447h1v3h-1zM109 453h1v3h-1zM109 459h1v3h-1zM109 465h1v3h-1zM109 471h1v3h-1zM109 477h1v3h-1zM109 483h1v3h-1zM109 489h1v3h-1zM109 495h1v3h-1zM109 501h1v3h-1zM109 507h1v3h-1zM109 513h1v3h-1zM109 519h1v3h-1zM109 525h1v3h-1zM109 531h1v3h-1zM109 537h1v3h-1zM109 543h1v3h-1zM109 549h1v2h-1z"/><path fill="#778899" d="M141 34h1v2h-1zM141 39h1v3h-1zM141 45h1v3h-1zM141 51h1v3h-1zM141 57h1v3h-1zM141 63h1v3h-1zM141 69h1v3h-1zM141 75h1v3h-1zM141 81h1v3h-1zM141 87h1v3h-1zM141 93h1v3h-1zM141 99h1v3h-1zM141 105h1v3h-1zM141 111h1v3h-1zM141 117h1v3h-1zM141 123h1v3h-1zM141 129h1v3h-1zM141 135h1v3h-1zM141 141h1v3h-1zM141 147h1v3h-1zM141 153h1v3h-1zM141 159h1v3h-1zM141 165h1v3h-1zM141 171h1v3h-1zM141 177h1v3h-1zM141 183h1v3h-1zM141 189h1v3h-1zM141 195h1v3h-1zM141 201h1v3h-1zM141 207h1v3h-1zM141 213h1v3h-1zM141 219h1v3h-1zM141 225h1v3h-1zM141 231h1v3h-1zM141 237h1v3h-1zM141 243h1v3h-1zM141 249h1v3h-1zM141 255h1v3h-1zM141 261h1v3h-1zM141 267h1v3h-1zM141 273h1v3h-1zM141 279h1v3h-1zM141 285h1v2h-1z"/><path fill="#778899" d="M141 291h1v3h-1zM141 297h1v3h-1zM141 303h1v3h-1zM141 309h1v3h-1zM141 315h1v3h-1zM141 321h1v3h-1zM141 327h1v3h-1zM141 333h1v3h-1zM141 339h1v3h-1zM141 345h1v3h-1zM141 351h1v3h-1zM141 357h1v3h-1zM141 363h1v3h-1zM141 369h1v3h-1zM141 375h1v3h-1zM141 381h1v3h-1zM141 387h1v3h-1zM141 393h1v3h-1zM141 399h1v3h-1zM141 405h1v3h-1zM141 411h1v3h-1z"/><path fill="#778899" d="M141 423h1v3h-1zM141 429h1v3h-1zM141 435h1v3h-1zM141 441h1v3h-1zM141 447h1v3h-1zM141 453h1v3h-1zM141 459h1v3h-1zM141 465h1v3h-1zM141 471h1v3h-1zM141 477h1v3h-1zM141 483h1v3h-1zM141 489h1v3h-1zM141 495h1v3h-1zM141 501h1v3h-1zM141 507h1v3h-1zM141 513h1v3h-1zM141 519h1v3h-1zM141 525h1v3h-1zM141 531h1v3h-1zM141 537h1v3h-1zM141 543h1v3h-1zM141 549h1v2h-1z"/><path fill="#778899" d="M173 34h1v2h-1zM173 39h1v3h-1zM173 45h1v3h-1zM173 51h1v3h-1zM173 57h1v3h-1zM173 63h1v3h-1zM173 69h1v3h-1zM173 75h1v3h-1zM173 81h1v3h-1zM173 87h1v3h-1zM173 93h1v3h-1zM173 99h1v3h-1zM173 105h1v3h-1zM173 111h1v3h-1zM173 117h1v3h-1zM173 123h1v3h-1zM173 129h1v3h-1zM173 135h1v3h-1zM173 141h1v3h-1zM173 147h1v3h-1zM173 153h1v3h-1zM173 159h1v3h-1zM173 165h1v3h-1zM173 171h1v3h-1zM173 177h1v3h-1zM173 183h1v3h-1zM173 189h1v3h-1zM173 195h1v3h-1zM173 201h1v3h-1zM173 207h1v3h-1zM173 213h1v3h-1zM173 219h1v3h-1zM173 225h1v3h-1zM173 231h1v3h-1zM173 237h1v3h-1zM173 243h1v3h-1zM173 249h1v3h-1zM173 255h1v3h-1zM173 261h1v3h-1zM173 267h1v3h-1zM173 273h1v3h-1zM173 279h1v3h-1zM173 285h1v2h-1z"/><path fill="#778899" d="M173 291h1v3h-1zM173 297h1v3h-1zM173 303h1v3h-1zM173 309h1v3h-1zM173 315h1v3h-1zM173 321h1v3h-1zM173 327h1v3h-1zM173 333h1v3h-1zM173 339h1v3h-1zM173 345h1v3h-1zM173 351h1v3h-1zM173 357h1v3h-1zM173 363h1v3h-1zM173 369h1v3h-1zM173 375h1v3h-1zM173 381h1v3h-1zM173 387h1v3h-1zM173 393h1v3h-1zM173 399h1v3h-1zM173 405h1v3h-1zM173 411h1v3h-1z"/><path fill="#778899" d="M173 423h1v3h-1zM173 429h1v3h-1zM173 435h1v3h-1zM173 441h1v3h-1zM173 447h1v3h-1zM173 453h1v3h-1zM173 459h1v3h-1zM173 465h1v3h-1zM173 471h1v3h-1zM173 477h1v3h-1zM173 483h1v3h-1zM173 489h1v3h-1zM173 495h1v3h-1zM173 501h1v3h-1zM173 507h1v3h-1zM173 513h1v3h-1zM173 519h1v3h-1zM173 525h1v3h-1zM173 531h1v3h-1zM173 537h1v3h-1zM173 543h1v3h-1zM173 549h1v2h-1z"/><path fill="#778899" d="M205 34h1v2h-1zM205 39h1v3h-1zM205 45h1v3h-1zM205 51h1v3h-1zM205 57h1v3h-1zM205 63h1v3h-1zM205 69h1v3h-1zM205 75h1v3h-1zM205 81h1v3h-1zM205 87h1v3h-1zM205 93h1v3h-1zM205 99h1v3h-1zM205 105h1v3h-1zM205 111h1v3h-1zM205 117h1v3h-1zM205 123h1v3h-1zM205 129h1v3h-1zM205 135h1v3h-1zM205 141h1v3h-1zM205 147h1v3h-1zM205 153h1v3h-1zM205 159h1v3h-1zM205 165h1v3h-1zM205 171h1v3h-1zM205 177h1v3h-1zM205 183h1v3h-1zM205 189h1v3h-1zM205 195h1v3h-1zM205 201h1v3h-1zM205 207h1v3h-1zM205 213h1v3h-1zM205 219h1v3h-1zM205 225h1v3h-1zM205 231h1v3h-1zM205 237h1v3h-1zM205 243h1v3h-1zM205 249h1v3h-1zM205 255h1v3h-1zM205 261h1v3h-1zM205 267h1v3h-1zM205 273h1v3h-1zM205 279h1v3h-1zM205 285h1v2h-1z"/><path fill="#778899" d="M205 291h1v3h-1zM205 297h1v3h-1zM205 303h1v3h-1zM205 309h1v3h-1zM205 315h1v3h-1zM205 321h1v3h-1zM205 327h1v3h-1zM205 333h1v3h-1zM205 339h1v3h-1zM205 345h1v3h-1zM205 351h1v3h-1zM205 357h1v3h-1zM205 363h1v3h-1zM205 369h1v3h-1zM205 375h1v3h-1zM205 381h1v3h-1zM205 387h1v3h-1zM205 393h1v3h-1zM205 399h1v3h-1zM205 405h1v3h-1zM205 411h1v3h-1z"/><path fill="#778899" d="M205 423h1v3h-1zM205 429h1v3h-1zM205 435h1v3h-1zM205 441h1v3h-1zM205 447h1v3h-1zM205 453h1v3h-1zM205 459h1v3h-1zM205 465h1v3h-1zM205 471h1v3h-1zM205 477h1v3h-1zM205 483h1v3h-1zM205 489h1v3h-1zM205 495h1v3h-1zM205 501h1v3h-1zM205 507h1v3h-1zM205 513h1v3h-1zM205 519h1v3h-1zM205 525h1v3h-1zM205 531h1v3h-1zM205 537h1v3h-1zM205 543h1v3h-1zM205 549h1v2h-1z"/><path fill="#778899" d="M237 34h1v2h-1zM237 39h1v3h-1zM237 45h1v3h-1zM237 51h1v3h-1zM237 57h1v3h-1zM237 63h1v3h-1zM237 69h1v3h-1zM237 75h1v3h-1zM237 81h1v3h-1zM237 87h1v3h-1zM237 93h1v3h-1zM237 99h1v3h-1zM237 105h1v3h-1zM237 111h1v3h-1zM237 117h1v3h-1zM237 123h1v3h-1zM237 129h1v3h-1zM237 135h1v3h-1zM237 141h1v3h-1zM237 147h1v3h-1zM237 153h1v3h-1zM237 159h1v3h-1zM237 165h1v3h-1zM237 171h1v3h-1zM237 177h1v3h-1zM237 183h1v3h-1zM237 189h1v3h-1zM237 195h1v3h-1zM237 201h1v3h-1zM237 207h1v3h-1zM237 213h1v3h-1zM237 219h1v3h-1zM237 225h1v3h-1zM237 231h1v3h-1zM237 237h1v3h-1zM237 243h1v3h-1zM237 249h1v3h-1zM237 255h1v3h-1zM237 261h1v3h-1zM237 267h1v3h-1zM237 273h1v3h-1zM237 279h1v3h-1zM237 285h1v2h-1z"/><path fill="#778899" d="M237 291h1v3h-1zM237 297h1v3h-1zM237 303h1v3h-1zM237 309h1v3h-1zM237 315h1v3h-1zM237 321h1v3h-1zM237 327h1v3h-1zM237 333h1v3h-1zM237 339h1v3h-1zM237 345h1v3h-1zM237 351h1v3h-1zM237 357h1v3h-1zM237 363h1v3h-1zM237 369h1v3h-1zM237 375h1v3h-1zM237 381h1v3h-1zM237 387h1v3h-1zM237 393h1v3h-1zM237 399h1v3h-1zM237 405h1v3h-1zM237 411h1v3h-1z"/><path fill="#778899" d="M237 423h1v3h-1zM237 429h1v3h-1zM237 435h1v3h-1zM237 441h1v3h-1zM237 447h1v3h-1zM237 453h1v3h-1zM237 459h1v3h-1zM237 465h1v3h-1zM237 471h1v3h-1zM237 477h1v3h-1zM237 483h1v3h-1zM237 489h1v3h-1zM237 495h1v3h-1zM237 501h1v3h-1zM237 507h1v3h-1zM237 513h1v3h-1zM237 519h1v3h-1zM237 525h1v3h-1zM237 531h1v3h-1zM237 537h1v3h-1zM237 543h1v3h-1zM237 549h1v2h-1z"/><path fill="#778899" d="M269 34h1v2h-1zM269 39h1v3h-1zM269 45h1v3h-1zM269 51h1v3h-1zM269 57h1v3h-1zM269 63h1v3h-1zM269 69h1v3h-1zM269 75h1v3h-1zM269 81h1v3h-1zM269 87h1v3h-1zM269 93h1v3h-1zM269 99h1v3h-1zM269 105h1v3h-1zM269 111h1v3h-1zM269 117h1v3h-1zM269 123h1v3h-1zM269 129h1v3h-1zM269 135h1v3h-1zM269 141h1v3h-1zM269 147h1v3h-1zM269 153h1v3h-1zM269 159h1v3h-1zM269 165h1v3h-1zM269 171h1v3h-1zM269 177h1v3h-1zM269 183h1v3h-1zM269 189h1v3h-1zM269 195h1v3h-1zM269 201h1v3h-1zM269 207h1v3h-1zM269 213h1v3h-1zM269 219h1v3h-1zM269 225h1v3h-1zM269 231h1v3h-1zM269 237h1v3h-1zM269 243h1v3h-1zM269 249h1v3h-1zM269 255h1v3h-1zM269 261h1v3h-1zM269 267h1v3h-1zM269 273h1v3h-1zM269 279h1v3h-1zM269 285h1v2h-1z"/><path fill="#778899" d="M269 291h1v3h-1zM269 297h1v3h-1zM269 303h1v3h-1zM269 309h1v3h-1zM269 315h1v3h-1zM269 321h1v3h-1zM269 327h1v3h-1zM269 333h1v3h-1zM269 339h1v3h-1zM269 345h1v3h-1zM269 351h1v3h-1zM269 357h1v3h-1zM269 363h1v3h-1zM269 369h1v3h-1zM269 375h1v3h-1zM269 381h1v3h-1zM269 387h1v3h-1zM269 393h1v3h-1zM269 399h1v3h-1zM269 405h1v3h-1zM269 411h1v3h-1z"/><path fill="#778899" d="M269 423h1v3h-1zM269 429h1v3h-1zM269 435h1v3h-1zM269 441h1v3h-1zM269 447h1v3h-1zM269 453h1v3h-1zM269 459h1v3h-1zM269 465h1v3h-1zM269 471h1v3h-1zM269 477h1v3h-1zM269 483h1v3h-1zM269 489h1v3h-1zM269 495h1v3h-1zM269 501h1v3h-1zM269 507h1v3h-1zM269 513h1v3h-1zM269 519h1v3h-1zM269 525h1v3h-1zM269 531h1v3h-1zM269 537h1v3h-1zM269 543h1v3h-1zM269 549h1v2h-1z"/><path fill="#778899" d="M301 34h1v2h-1zM301 39h1v3h-1zM301 45h1v3h-1zM301 51h1v3h-1zM301 57h1v3h-1zM301 63h1v3h-1zM301 69h1v3h-1zM301 75h1v3h-1zM301 81h1v3h-1zM301 87h1v3h-1zM301 93h1v3h-1zM301 99h1v3h-1zM301 105h1v3h-1zM301 111h1v3h-1zM301 117h1v3h-1zM301 123h1v3h-1zM301 129h1v3h-1zM301 135h1v3h-1zM301 141h1v3h-1zM301 147h1v3h-1zM301 153h1v3h-1zM301 159h1v3h-1zM301 165h1v3h-1zM301 171h1v3h-1zM301 177h1v3h-1zM301 183h1v3h-1zM301 189h1v3h-1zM301 195h1v3h-1zM301 201h1v3h-1zM301 207h1v3h-1zM301 213h1v3h-1zM301 219h1v3h-1zM301 225h1v3h-1zM301 231h1v3h-1zM301 237h1v3h-1zM301 243h1v3h-1zM301 249h1v3h-1zM301 255h1v3h-1zM301 261h1v3h-1zM301 267h1v3h-1zM301 273h1v3h-1zM301 279h1v3h-1zM301 285h1v2h-1z"/><path fill="#778899" d="M301 291h1v3h-1zM301 297h1v3h-1zM301 303h1v3h-1zM301 309h1v3h-1zM301 315h1v3h-1zM301 321h1v3h-1zM301 327h1v3h-1zM301 333h1v3h-1zM301 339h1v3h-1zM301 345h1v3h-1zM301 351h1v3h-1zM301 357h1v3h-1zM301 363h1v3h-1zM301 369h1v3h-1zM301 375h1v3h-1zM301 381h1v3h-1zM301 387h1v3h-1zM301 393h1v3h-1zM301 399h1v3h-1zM301 405h1v3h-1zM301 411h1v3h-1z"/><path fill="#778899" d="M301 423h1v3h-1zM301 429h1v3h-1zM301 435h1v3h-1zM301 441h1v3h-1zM301 447h1v3h-1zM301 453h1v3h-1zM301 459h1v3h-1zM301 465h1v3h-1zM301 471h1v3h-1zM301 477h1v3h-1zM301 483h1v3h-1zM301 489h1v3h-1zM301 495h1v3h-1zM301 501h1v3h-1zM301 507h1v3h-1zM301 513h1v3h-1zM301 519h1v3h-1zM301 525h1v3h-1zM301 531h1v3h-1zM301 537h1v3h-1zM301 543h1v3h-1zM301 549h1v2h-1z"/><path fill="#778899" d="M333 34h1v2h-1zM333 39h1v3h-1zM333 45h1v3h-1zM333 51h1v3h-1zM333 57h1v3h-1zM333 63h1v3h-1zM333 69h1v3h-1zM333 75h1v3h-1zM333 81h1v3h-1zM333 87h1v3h-1zM333 93h1v3h-1zM333 99h1v3h-1zM333 105h1v3h-1zM333 111h1v3h-1zM333 117h1v3h-1zM333 123h1v3h-1zM333 129h1v3h-1zM333 135h1v3h-1zM333 141h1v3h-1zM333 147h1v3h-1zM333 153h1v3h-1zM333 159h1v3h-1zM333 165h1v3h-1zM333 171h1v3h-1zM333 177h1v3h-1zM333 183h1v3h-1zM333 189h1v3h-1zM333 195h1v3h-1zM333 201h1v3h-1zM333 207h1v3h-1zM333 213h1v3h-1zM333 219h1v3h-1zM333 225h1v3h-1zM333 231h1v3h-1zM333 237h1v3h-1zM333 243h1v3h-1zM333 249h1v3h-1zM333 255h1v3h-1zM333 261h1v3h-1zM333 267h1v3h-1zM333 273h1v3h-1zM333 279h1v3h-1zM333 285h1v2h-1z"/><path fill="#778899" d="M333 291h1v3h-1zM333 297h1v3h-1zM333 303h1v3h-1zM333 309h1v3h-1zM333 315h1v3h-1zM333 321h1v3h-1zM333 327h1v3h-1zM333 333h1v3h-1zM333 339h1v3h-1zM333 345h1v3h-1zM333 351h1v3h-1zM333 357h1v3h-1zM333 363h1v3h-1zM333 369h1v3h-1zM333 375h1v3h-1zM333 381h1v3h-1zM333 387h1v3h-1zM333 393h1v3h-1zM333 399h1v3h-1zM333 405h1v3h-1zM333 411h1v3h-1z"/><path fill="#778899" d="M333 423h1v3h-1zM333 429h1v3h-1zM333 435h1v3h-1zM333 441h1v3h-1zM333 447h1v3h-1zM333 453h1v3h-1zM333 459h1v3h-1zM333 465h1v3h-1zM333 471h1v3h-1zM333 477h1v3h-1zM333 483h1v3h-1zM333 489h1v3h-1zM333 495h1v3h-1zM333 501h1v3h-1zM333 507h1v3h-1zM333 513h1v3h-1zM333 519h1v3h-1zM333 525h1v3h-1zM333 531h1v3h-1zM333 537h1v3h-1zM333 543h1v3h-1zM333 549h1v2h-1z"/><path fill="#778899" d="M365 34h1v2h-1zM365 39h1v3h-1zM365 45h1v3h-1zM365 51h1v3h-1zM365 57h1v3h-1zM365 63h1v3h-1zM365 69h1v3h-1zM365 75h1v3h-1zM365 81h1v3h-1zM365 87h1v3h-1zM365 93h1v3h-1zM365 99h1v3h-1zM365 105h1v3h-1zM365 111h1v3h-1zM365 117h1v3h-1zM365 123h1v3h-1zM365 129h1v3h-1zM365 135h1v3h-1zM365 141h1v3h-1zM365 147h1v3h-1zM365 153h1v3h-1zM365 159h1v3h-1zM365 165h1v3h-1zM365 171h1v3h-1zM365 177h1v3h-1zM365 183h1v3h-1zM365 189h1v3h-1zM365 195h1v3h-1zM365 201h1v3h-1zM365 207h1v3h-1zM365 213h1v3h-1zM365 219h1v3h-1zM365 225h1v3h-1zM365 231h1v3h-1zM365 237h1v3h-1zM365 243h1v3h-1zM365 249h1v3h-1zM365 255h1v3h-1zM365 261h1v3h-1zM365 267h1v3h-1zM365 273h1v3h-1zM365 279h1v3h-1zM365 285h1v2h-1z"/><path fill="#778899" d="M365 291h1v3h-1zM365 297h1v3h-1zM365 303h1v3h-1zM365 309h1v3h-1zM365 315h1v3h-1zM365 321h1v3h-1zM365 327h1v3h-1zM365 333h1v3h-1zM365 339h1v3h-1zM365 345h1v3h-1zM365 351h1v3h-1zM365 357h1v3h-1zM365 363h1v3h-1zM365 369h1v3h-1zM365 375h1v3h-1zM365 381h1v3h-1zM365 387h1v3h-1zM365 393h1v3h-1zM365 399h1v3h-1zM365 405h1v3h-1zM365 411h1v3h-1z"/><path fill="#778899" d="M365 423h1v3h-1zM365 429h1v3h-1zM365 435h1v3h-1zM365 441h1v3h-1zM365 447h1v3h-1zM365 453h1v3h-1zM365 459h1v3h-1zM365 465h1v3h-1zM365 471h1v3h-1zM365 477h1v3h-1zM365 483h1v3h-1zM365 489h1v3h-1zM365 495h1v3h-1zM365 501h1v3h-1zM365 507h1v3h-1zM365 513h1v3h-1zM365 519h1v3h-1zM365 525h1v3h-1zM365 531h1v3h-1zM365 537h1v3h-1zM365 543h1v3h-1zM365 549h1v2h-1z"/><path fill="#778899" d="M397 34h1v2h-1zM397 39h1v3h-1zM397 45h1v3h-1zM397 51h1v3h-1zM397 57h1v3h-1zM397 63h1v3h-1zM397 69h1v3h-1zM397 75h1v3h-1zM397 81h1v3h-1zM397 87h1v3h-1zM397 93h1v3h-1zM397 99h1v3h-1zM397 105h1v3h-1zM397 111h1v3h-1zM397 117h1v3h-1zM397 123h1v3h-1zM397 129h1v3h-1zM397 135h1v3h-1zM397 141h1v3h-1zM397 147h1v3h-1zM397 153h1v3h-1zM397 159h1v3h-1zM397 165h1v3h-1zM397 171h1v3h-1zM397 177h1v3h-1zM397 183h1v3h-1zM397 189h1v3h-1zM397 195h1v3h-1zM397 201h1v3h-1zM397 207h1v3h-1zM397 213h1v3h-1zM397 219h1v3h-1zM397 225h1v3h-1zM397 231h1v3h-1zM397 237h1v3h-1zM397 243h1v3h-1zM397 249h1v3h-1zM397 255h1v3h-1zM397 261h1v3h-1zM397 267h1v3h-1zM397 273h1v3h-1zM397 279h1v3h-1zM397 285h1v2h-1z"/><path fill="#778899" d="M397 291h1v3h-1zM397 297h1v3h-1zM397 303h1v3h-1zM397 309h1v3h-1zM397 315h1v3h-1zM397 321h1v3h-1zM397 327h1v3h-1zM397 333h1v3h-1zM397 339h1v3h-1zM397 345h1v3h-1zM397 351h1v3h-1zM397 357h1v3h-1zM397 363h1v3h-1zM397 369h1v3h-1zM397 375h1v3h-1zM397 381h1v3h-1zM397 387h1v3h-1zM397 393h1v3h-1zM397 399h1v3h-1zM397 405h1v3h-1zM397 411h1v3h-1z"/><path fill="#778899" d="M397 423h1v3h-1zM397 429h1v3h-1zM397 435h1v3h-1zM397 441h1v3h-1zM397 447h1v3h-1zM397 453h1v3h-1zM397 459h1v3h-1zM397 465h1v3h-1zM397 471h1v3h-1zM397 477h1v3h-1zM397 483h1v3h-1zM397 489h1v3h-1zM397 495h1v3h-1zM397 501h1v3h-1zM397 507h1v3h-1zM397 513h1v3h-1zM397 519h1v3h-1zM397 525h1v3h-1zM397 531h1v3h-1zM397 537h1v3h-1zM397 543h1v3h-1zM397 549h1v2h-1z"/><path fill="#778899" d="M429 34h1v2h-1zM429 39h1v3h-1zM429 45h1v3h-1zM429 51h1v3h-1zM429 57h1v3h-1zM429 63h1v3h-1zM429 69h1v3h-1zM429 75h1v3h-1zM429 81h1v3h-1zM429 87h1v3h-1zM429 93h1v3h-1zM429 99h1v3h-1zM429 105h1v3h-1zM429 111h1v3h-1zM429 117h1v3h-1zM429 123h1v3h-1zM429 129h1v3h-1zM429 135h1v3h-1zM429 141h1v3h-1zM429 147h1v3h-1zM429 153h1v3h-1zM429 159h1v3h-1zM429 165h1v3h-1zM429 171h1v3h-1zM429 177h1v3h-1zM429 183h1v3h-1zM429 189h1v3h-1zM429 195h1v3h-1zM429 201h1v3h-1zM429 207h1v3h-1zM429 213h1v3h-1zM429 219h1v3h-1zM429 225h1v3h-1zM429 231h1v3h-1zM429 237h1v3h-1zM429 243h1v3h-1zM429 249h1v3h-1zM429 255h1v3h-1zM429 261h1v3h-1zM429 267h1v3h-1zM429 273h1v3h-1zM429 279h1v3h-1zM429 285h1v2h-1z"/><path fill="#778899" d="M429 291h1v3h-1zM429 297h1v3h-1zM429 303h1v3h-1zM429 309h1v3h-1zM429 315h1v3h-1zM429 321h1v3h-1zM429 327h1v3h-1zM429 333h1v3h-1zM429 339h1v3h-1zM429 345h1v3h-1zM429 351h1v3h-1zM429 357h1v3h-1zM429 363h1v3h-1zM429 369h1v3h-1zM429 375h1v3h-1zM429 381h1v3h-1zM429 387h1v3h-1zM429 393h1v3h-1zM429 399h1v3h-1zM429 405h1v3h-1zM429 411h1v3h-1z"/><path fill="#778899" d="M429 423h1v3h-1zM429 429h1v3h-1zM429 435h1v3h-1zM429 441h1v3h-1zM429 447h1v3h-1zM429 453h1v3h-1zM429 459h1v3h-1zM429 465h1v3h-1zM429 471h1v3h-1zM429 477h1v3h-1zM429 483h1v3h-1zM429 489h1v3h-1zM429 495h1v3h-1zM429 501h1v3h-1zM429 507h1v3h-1zM429 513h1v3h-1zM429 519h1v3h-1zM429 525h1v3h-1zM429 531h1v3h-1zM429 537h1v3h-1zM429 543h1v3h-1zM429 549h1v2h-1z"/><path fill="#778899" d="M461 34h1v2h-1zM461 39h1v3h-1zM461 45h1v3h-1zM461 51h1v3h-1zM461 57h1v3h-1zM461 63h1v3h-1zM461 69h1v3h-1zM461 75h1v3h-1zM461 81h1v3h-1zM461 87h1v3h-1zM461 93h1v3h-1zM461 99h1v3h-1zM461 105h1v3h-1zM461 111h1v3h-1zM461 117h1v3h-1zM461 123h1v3h-1zM461 129h1v3h-1zM461 135h1v3h-1zM461 141h1v3h-1zM461 147h1v3h-1zM461 153h1v3h-1zM461 159h1v3h-1zM461 165h1v3h-1zM461 171h1v3h-1zM461 177h1v3h-1zM461 183h1v3h-1zM461 189h1v3h-1zM461 195h1v3h-1zM461 201h1v3h-1zM461 207h1v3h-1zM461 213h1v3h-1zM461 219h1v3h-1zM461 225h1v3h-1zM461 231h1v3h-1zM461 237h1v3h-1zM461 243h1v3h-1zM461 249h1v3h-1zM461 255h1v3h-1zM461 261h1v3h-1zM461 267h1v3h-1zM461 273h1v3h-1zM461 279h1v3h-1zM461 285h1v2h-1z"/><path fill="#778899" d="M461 291h1v3h-1zM461 297h1v3h-1zM461 303h1v3h-1zM461 309h1v3h-1zM461 315h1v3h-1zM461 321h1v3h-1zM461 327h1v3h-1zM461 333h1v3h-1zM461 339h1v3h-1zM461 345h1v3h-1zM461 351h1v3h-1zM461 357h1v3h-1zM461 363h1v3h-1zM461 369h1v3h-1zM461 375h1v3h-1zM461 381h1v3h-1zM461 387h1v3h-1zM461 393h1v3h-1zM461 399h1v3h-1zM461 405h1v3h-1zM461 411h1v3h-1z"/><path fill="#778899" d="M461 423h1v3h-1zM461 429h1v3h-1zM461 435h1v3h-1zM461 441h1v3h-1zM461 447h1v3h-1zM461 453h1v3h-1zM461 459h1v3h-1zM461 465h1v3h-1zM461 471h1v3h-1zM461 477h1v3h-1zM461 483h1v3h-1zM461 489h1v3h-1zM461 495h1v3h-1zM461 501h1v3h-1zM461 507h1v3h-1zM461 513h1v3h-1zM461 519h1v3h-1zM461 525h1v3h-1zM461 531h1v3h-1zM461 537h1v3h-1zM461 543h1v3h-1zM461 549h1v2h-1z"/><path fill="#778899" d="M493 34h1v2h-1zM493 39h1v3h-1zM493 45h1v3h-1zM493 51h1v3h-1zM493 57h1v3h-1zM493 63h1v3h-1zM493 69h1v3h-1zM493 75h1v3h-1zM493 81h1v3h-1zM493 87h1v3h-1zM493 93h1v3h-1zM493 99h1v3h-1zM493 105h1v3h-1zM493 111h1v3h-1zM493 117h1v3h-1zM493 123h1v3h-1zM493 129h1v3h-1zM493 135h1v3h-1zM493 141h1v3h-1zM493 147h1v3h-1zM493 153h1v3h-1zM493 159h1v3h-1zM493 165h1v3h-1zM493 171h1v3h-1zM493 177h1v3h-1zM493 183h1v3h-1zM493 189h1v3h-1zM493 195h1v3h-1zM493 201h1v3h-1zM493 207h1v3h-1zM493 213h1v3h-1zM493 219h1v3h-1zM493 225h1v3h-1zM493 231h1v3h-1zM493 237h1v3h-1zM493 243h1v3h-1zM493 249h1v3h-1zM493 255h1v3h-1zM493 261h1v3h-1zM493 267h1v3h-1zM493 273h1v3h-1zM493 279h1v3h-1zM493 285h1v2h-1z"/><path fill="#778899" d="M493 291h1v3h-1zM493 297h1v3h-1zM493 303h1v3h-1zM493 309h1v3h-1zM493 315h1v3h-1zM493 321h1v3h-1zM493 327h1v3h-1zM493 333h1v3h-1zM493 339h1v3h-1zM493 345h1v3h-1zM493 351h1v3h-1zM493 357h1v3h-1zM493 363h1v3h-1zM493 369h1v3h-1zM493 375h1v3h-1zM493 381h1v3h-1zM493 387h1v3h-1zM493 393h1v3h-1zM493 399h1v3h-1zM493 405h1v3h-1zM493 411h1v3h-1z"/><path fill="#778899" d="M493 423h1v3h-1zM493 429h1v3h-1zM493 435h1v3h-1zM493 441h1v3h-1zM493 447h1v3h-1zM493 453h1v3h-1zM493 459h1v3h-1zM493 465h1v3h-1zM493 471h1v3h-1zM493 477h1v3h-1zM493 483h1v3h-1zM493 489h1v3h-1zM493 495h1v3h-1zM493 501h1v3h-1zM493 507h1v3h-1zM493 513h1v3h-1zM493 519h1v3h-1zM493 525h1v3h-1zM493 531h1v3h-1zM493 537h1v3h-1zM493 543h1v3h-1zM493 549h1v2h-1z"/><path fill="#778899" d="M525 34h1v2h-1zM525 39h1v3h-1zM525 45h1v3h-1zM525 51h1v3h-1zM525 57h1v3h-1zM525 63h1v3h-1zM525 69h1v3h-1zM525 75h1v3h-1zM525 81h1v3h-1zM525 87h1v3h-1zM525 93h1v3h-1zM525 99h1v3h-1zM525 105h1v3h-1zM525 111h1v3h-1zM525 117h1v3h-1zM525 123h1v3h-1zM525 129h1v3h-1zM525 135h1v3h-1zM525 141h1v3h-1zM525 147h1v3h-1zM525 153h1v3h-1zM525 159h1v3h-1zM525 165h1v3h-1zM525 171h1v3h-1zM525 177h1v3h-1zM525 183h1v3h-1zM525 189h1v3h-1zM525 195h1v3h-1zM525 201h1v3h-1zM525 207h1v3h-1zM525 213h1v3h-1zM525 219h1v3h-1zM525 225h1v3h-1zM525 231h1v3h-1zM525 237h1v3h-1zM525 243h1v3h-1zM525 249h1v3h-1zM525 255h1v3h-1zM525 261h1v3h-1zM525 267h1v3h-1zM525 273h1v3h-1zM525 279h1v3h-1zM525 285h1v2h-1z"/><path fill="#778899" d="M525 291h1v3h-1zM525 297h1v3h-1zM525 303h1v3h-1zM525 309h1v3h-1zM525 315h1v3h-1zM525 321h1v3h-1zM525 327h1v3h-1zM525 333h1v3h-1zM525 339h1v3h-1zM525 345h1v3h-1zM525 351h1v3h-1zM525 357h1v3h-1zM525 363h1v3h-1zM525 369h1v3h-1zM525 375h1v3h-1zM525 381h1v3h-1zM525 387h1v3h-1zM525 393h1v3h-1zM525 399h1v3h-1zM525 405h1v3h-1zM525 411h1v3h-1z"/><path fill="#778899" d="M525 423h1v3h-1zM525 429h1v3h-1zM525 435h1v3h-1zM525 441h1v3h-1zM525 447h1v3h-1zM525 453h1v3h-1zM525 459h1v3h-1zM525 465h1v3h-1zM525 471h1v3h-1zM525 477h1v3h-1zM525 483h1v3h-1zM525 489h1v3h-1zM525 495h1v3h-1zM525 501h1v3h-1zM525 507h1v3h-1zM525 513h1v3h-1zM525 519h1v3h-1zM525 525h1v3h-1zM525 531h1v3h-1zM525 537h1v3h-1zM525 543h1v3h-1zM525 549h1v2h-1z"/><path fill="#778899" d="M557 34h1v2h-1zM557 39h1v3h-1zM557 45h1v3h-1zM557 51h1v3h-1zM557 57h1v3h-1zM557 63h1v3h-1zM557 69h1v3h-1zM557 75h1v3h-1zM557 81h1v3h-1zM557 87h1v3h-1zM557 93h1v3h-1zM557 99h1v3h-1zM557 105h1v3h-1zM557 111h1v3h-1zM557 117h1v3h-1zM557 123h1v3h-1zM557 129h1v3h-1zM557 135h1v3h-1zM557 141h1v3h-1zM557 147h1v3h-1zM557 153h1v3h-1zM557 159h1v3h-1zM557 165h1v3h-1zM557 171h1v3h-1zM557 177h1v3h-1zM557 183h1v3h-1zM557 189h1v3h-1zM557 195h1v3h-1zM557 201h1v3h-1zM557 207h1v3h-1zM557 213h1v3h-1zM557 219h1v3h-1zM557 225h1v3h-1zM557 231h1v3h-1zM557 237h1v3h-1zM557 243h1v3h-1zM557 249h1v3h-1zM557 255h1v3h-1zM557 261h1v3h-1zM557 267h1v3h-1zM557 273h1v3h-1zM557 279h1v3h-1zM557 285h1v2h-1z"/><path fill="#778899" d="M557 291h1v3h-1zM557 297h1v3h-1zM557 303h1v3h-1zM557 309h1v3h-1zM557 315h1v3h-1zM557 321h1v3h-1zM557 327h1v3h-1zM557 333h1v3h-1zM557 339h1v3h-1zM557 345h1v3h-1zM557 351h1v3h-1zM557 357h1v3h-1zM557 363h1v3h-1zM557 369h1v3h-1zM557 375h1v3h-1zM557 381h1v3h-1zM557 387h1v3h-1zM557 393h1v3h-1zM557 399h1v3h-1zM557 405h1v3h-1zM557 411h1v3h-1z"/><path fill="#778899" d="M557 423h1v3h-1zM557 429h1v3h-1zM557 435h1v3h-1zM557 441h1v3h-1zM557 447h1v3h-1zM557 453h1v3h-1zM557 459h1v3h-1zM557 465h1v3h-1zM557 471h1v3h-1zM557 477h1v3h-1zM557 483h1v3h-1zM557 489h1v3h-1zM557 495h1v3h-1zM557 501h1v3h-1zM557 507h1v3h-1zM557 513h1v3h-1zM557 519h1v3h-1zM557 525h1v3h-1zM557 531h1v3h-1zM557 537h1v3h-1zM557 543h1v3h-1zM557 549h1v2h-1z"/><path fill="#778899" d="M589 34h1v2h-1zM589 39h1v3h-1zM589 45h1v3h-1zM589 51h1v3h-1zM589 57h1v3h-1zM589 63h1v3h-1zM589 69h1v3h-1zM589 75h1v3h-1zM589 81h1v3h-1zM589 87h1v3h-1zM589 93h1v3h-1zM589 99h1v3h-1zM589 105h1v3h-1zM589 111h1v3h-1zM589 117h1v3h-1zM589 123h1v3h-1zM589 129h1v3h-1zM589 135h1v3h-1zM589 141h1v3h-1zM589 147h1v3h-1zM589 153h1v3h-1zM589 159h1v3h-1zM589 165h1v3h-1zM589 171h1v3h-1zM589 177h1v3h-1zM589 183h1v3h-1zM589 189h1v3h-1zM589 195h1v3h-1zM589 201h1v3h-1zM589 207h1v3h-1zM589 213h1v3h-1zM589 219h1v3h-1zM589 225h1v3h-1zM589 231h1v3h-1zM589 237h1v3h-1zM589 243h1v3h-1zM589 249h1v3h-1zM589 255h1v3h-1zM589 261h1v3h-1zM589 267h1v3h-1zM589 273h1v3h-1zM589 279h1v3h-1zM589 285h1v2h-1z"/><path fill="#778899" d="M589 291h1v3h-1zM589 297h1v3h-1zM589 303h1v3h-1zM589 309h1v3h-1zM589 315h1v3h-1zM589 321h1v3h-1zM589 327h1v3h-1zM589 333h1v3h-1zM589 339h1v3h-1zM589 345h1v3h-1zM589 351h1v3h-1zM589 357h1v3h-1zM589 363h1v3h-1zM589 369h1v3h-1zM589 375h1v3h-1zM589 381h1v3h-1zM589 387h1v3h-1zM589 393h1v3h-1zM589 399h1v3h-1zM589 405h1v3h-1zM589 411h1v3h-1z"/><path fill="#778899" d="M589 423h1v3h-1zM589 429h1v3h-1zM589 435h1v3h-1zM589 441h1v3h-1zM589 447h1v3h-1zM589 453h1v3h-1zM589 459h1v3h-1zM589 465h1v3h-1zM589 471h1v3h-1zM589 477h1v3h-1zM589 483h1v3h-1zM589 489h1v3h-1zM589 495h1v3h-1zM589 501h1v3h-1zM589 507h1v3h-1zM589 513h1v3h-1zM589 519h1v3h-1zM589 525h1v3h-1zM589 531h1v3h-1zM589 537h1v3h-1zM589 543h1v3h-1zM589 549h1v2h-1z"/><path fill="#778899" d="M621 34h1v2h-1zM621 39h1v3h-1zM621 45h1v3h-1zM621 51h1v3h-1zM621 57h1v3h-1zM621 63h1v3h-1zM621 69h1v3h-1zM621 75h1v3h-1zM621 81h1v3h-1zM621 87h1v3h-1zM621 93h1v3h-1zM621 99h1v3h-1zM621 105h1v3h-1zM621 111h1v3h-1zM621 117h1v3h-1zM621 123h1v3h-1zM621 129h1v3h-1zM621 135h1v3h-1zM621 141h1v3h-1zM621 147h1v3h-1zM621 153h1v3h-1zM621 159h1v3h-1zM621 165h1v3h-1zM621 171h1v3h-1zM621 177h1v3h-1zM621 183h1v3h-1zM621 189h1v3h-1zM621 195h1v3h-1zM621 201h1v3h-1zM621 207h1v3h-1zM621 213h1v3h-1zM621 219h1v3h-1zM621 225h1v3h-1zM621 231h1v3h-1zM621 237h1v3h-1zM621 243h1v3h-1zM621 249h1v3h-1zM621 255h1v3h-1zM621 261h1v3h-1zM621 267h1v3h-1zM621 273h1v3h-1zM621 279h1v3h-1zM621 285h1v2h-1z"/><path fill="#778899" d="M621 291h1v3h-1zM621 297h1v3h-1zM621 303h1v3h-1zM621 309h1v3h-1zM621 315h1v3h-1zM621 321h1v3h-1zM621 327h1v3h-1zM621 333h1v3h-1zM621 339h1v3h-1zM621 345h1v3h-1zM621 351h1v3h-1zM621 357h1v3h-1zM621 363h1v3h-1zM621 369h1v3h-1zM621 375h1v3h-1zM621 381h1v3h-1zM621 387h1v3h-1zM621 393h1v3h-1zM621 399h1v3h-1zM621 405h1v3h-1zM621 411h1v3h-1z"/><path fill="#778899" d="M621 423h1v3h-1zM621 429h1v3h-1zM621 435h1v3h-1zM621 441h1v3h-1zM621 447h1v3h-1zM621 453h1v3h-1zM621 459h1v3h-1zM621 465h1v3h-1zM621 471h1v3h-1zM621 477h1v3h-1zM621 483h1v3h-1zM621 489h1v3h-1zM621 495h1v3h-1zM621 501h1v3h-1zM621 507h1v3h-1zM621 513h1v3h-1zM621 519h1v3h-1zM621 525h1v3h-1zM621 531h1v3h-1zM621 537h1v3h-1zM621 543h1v3h-1zM621 549h1v2h-1z"/><path fill="#778899" d="M653 34h1v2h-1zM653 39h1v3h-1zM653 45h1v3h-1zM653 51h1v3h-1zM653 57h1v3h-1zM653 63h1v3h-1zM653 69h1v3h-1zM653 75h1v3h-1zM653 81h1v3h-1zM653 87h1v3h-1zM653 93h1v3h-1zM653 99h1v3h-1zM653 105h1v3h-1zM653 111h1v3h-1zM653 117h1v3h-1zM653 123h1v3h-1zM653 129h1v3h-1zM653 135h1v3h-1zM653 141h1v3h-1zM653 147h1v3h-1zM653 153h1v3h-1zM653 159h1v3h-1zM653 165h1v3h-1zM653 171h1v3h-1zM653 177h1v3h-1zM653 183h1v3h-1zM653 189h1v3h-1zM653 195h1v3h-1zM653 201h1v3h-1zM653 207h1v3h-1zM653 213h1v3h-1zM653 219h1v3h-1zM653 225h1v3h-1zM653 231h1v3h-1zM653 237h1v3h-1zM653 243h1v3h-1zM653 249h1v3h-1zM653 255h1v3h-1zM653 261h1v3h-1zM653 267h1v3h-1zM653 273h1v3h-1zM653 279h1v3h-1zM653 285h1v2h-1z"/><path fill="#778899" d="M653 291h1v3h-1zM653 297h1v3h-1zM653 303h1v3h-1zM653 309h1v3h-1zM653 315h1v3h-1zM653 321h1v3h-1zM653 327h1v3h-1zM653 333h1v3h-1zM653 339h1v3h-1zM653 345h1v3h-1zM653 351h1v3h-1zM653 357h1v3h-1zM653 363h1v3h-1zM653 369h1v3h-1zM653 375h1v3h-1zM653 381h1v3h-1zM653 387h1v3h-1zM653 393h1v3h-1zM653 399h1v3h-1zM653 405h1v3h-1zM653 411h1v3h-1z"/><path fill="#778899" d="M653 423h1v3h-1zM653 429h1v3h-1zM653 435h1v3h-1zM653 441h1v3h-1zM653 447h1v3h-1zM653 453h1v3h-1zM653 459h1v3h-1zM653 465h1v3h-1zM653 471h1v3h-1zM653 477h1v3h-1zM653 483h1v3h-1zM653 489h1v3h-1zM653 495h1v3h-1zM653 501h1v3h-1zM653 507h1v3h-1zM653 513h1v3h-1zM653 519h1v3h-1zM653 525h1v3h-1zM653 531h1v3h-1zM653 537h1v3h-1zM653 543h1v3h-1zM653 549h1v2h-1z"/><path fill="#c0c0c0" d="M14 302h3v1h-3zM20 302h3v1h-3zM26 302h3v1h-3zM32 302h3v1h-3zM38 302h3v1h-3zM44 302h3v1h-3zM50 302h3v1h-3zM56 302h3v1h-3zM62 302h3v1h-3zM68 302h3v1h-3zM74 302h3v1h-3zM80 302h3v1h-3zM86 302h3v1h-3zM92 302h3v1h-3zM98 302h3v1h-3zM104 302h3v1h-3zM110 302h3v1h-3zM116 302h3v1h-3zM122 302h3v1h-3zM128 302h3v1h-3zM134 302h3v1h-3zM140 302h3v1h-3zM146 302h3v1h-3zM152 302h3v1h-3zM158 302h3v1h-3zM164 302h3v1h-3zM170 302h3v1h-3zM176 302h3v1h-3zM182 302h3v1h-3zM188 302h3v1h-3zM194 302h3v1h-3zM200 302h3v1h-3zM206 302h3v1h-3zM212 302h3v1h-3zM218 302h3v1h-3zM224 302h3v1h-3zM230 302h3v1h-3zM236 302h3v1h-3zM242 302h3v1h-3zM248 302h3v1h-3zM254 302h3v1h-3zM260 302h3v1h-3zM266 302h3v1h-3zM272 302h3v1h-3zM278 302h3v1h-3zM284 302h3v1h-3zM290 302h3v1h-3zM296 302h3v1h-3zM302 302h3v1h-3zM308 302h3v1h-3zM314 302h3v1h-3zM320 302h3v1h-3zM326 302h3v1h-3zM332 302h3v1h-3zM338 302h3v1h-3zM344 302h3v1h-3zM350 302h3v1h-3zM356 302h3v1h-3zM362 302h3v1h-3zM368 302h3v1h-3zM374 302h3v1h-3zM380 302h3v1h-3zM386 302h3v1h-3zM392 302h3v1h-3zM398 302h3v1h-3zM404 302h3v1h-3zM410 302h3v1h-3zM416 302h3v1h-3zM422 302h3v1h-3zM428 302h3v1h-3zM434 302h3v1h-3zM440 302h3v1h-3zM446 302h3v1h-3zM452 302h3v1h-3zM458 302h3v1h-3zM464 302h3v1h-3zM470 302h3v1h-3zM476 302h3v1h-3zM482 302h3v1h-3zM488 302h3v1h-3zM494 302h3v1h-3zM500 302h3v1h-3zM506 302h3v1h-3zM512 302h3v1h-3zM518 302h3v1h-3zM524 302h3v1h-3zM530 302h3v1h-3zM536 302h3v1h-3zM542 302h3v1h-3zM548 302h3v1h-3zM554 302h3v1h-3zM560 302h3v1h-3zM566 302h3v1h-3zM572 302h3v1h-3zM578 302h3v1h-3zM584 302h3v1h-3zM590 302h3v1h-3zM596 302h3v1h-3zM602 302h3v1h-3zM608 302h3v1h-3zM614 302h3v1h-3zM620 302h3v1h-3zM626 302h3v1h-3zM632 302h3v1h-3zM638 302h3v1h-3zM644 302h3v1h-3zM650 302h3v1h-3zM656 302h3v1h-3zM662 302h3v1h-3zM668 302h3v1h-3zM674 302h3v1h-3z"/><path fill="#c0c0c0" d="M14 313h3v1h-3zM20 313h3v1h-3zM26 313h3v1h-3zM32 313h3v1h-3zM38 313h3v1h-3zM44 313h3v1h-3zM50 313h3v1h-3zM56 313h3v1h-3zM62 313h3v1h-3zM68 313h3v1h-3zM74 313h3v1h-3zM80 313h3v1h-3zM86 313h3v1h-3zM92 313h3v1h-3zM98 313h3v1h-3zM104 313h3v1h-3zM110 313h3v1h-3zM116 313h3v1h-3zM122 313h3v1h-3zM128 313h3v1h-3zM134 313h3v1h-3zM140 313h3v1h-3zM146 313h3v1h-3zM152 313h3v1h-3zM158 313h3v1h-3zM164 313h3v1h-3zM170 313h3v1h-3zM176 313h3v1h-3zM182 313h3v1h-3zM188 313h3v1h-3zM194 313h3v1h-3zM200 313h3v1h-3zM206 313h3v1h-3zM212 313h3v1h-3zM218 313h3v1h-3zM224 313h3v1h-3zM230 313h3v1h-3zM236 313h3v1h-3zM242 313h3v1h-3zM248 313h3v1h-3zM254 313h3v1h-3zM260 313h3v1h-3zM266 313h3v1h-3zM272 313h3v1h-3zM278 313h3v1h-3zM284 313h3v1h-3zM290 313h3v1h-3zM296 313h3v1h-3zM302 313h3v1h-3zM308 313h3v1h-3zM314 313h3v1h-3zM320 313h3v1h-3zM326 313h3v1h-3zM332 313h3v1h-3zM338 313h3v1h-3zM344 313h3v1h-3zM350 313h3v1h-3zM356 313h3v1h-3zM362 313h3v1h-3zM368 313h3v1h-3zM374 313h3v1h-3zM380 313h3v1h-3zM386 313h3v1h-3zM392 313h3v1h-3zM398 313h3v1h-3zM404 313h3v1h-3zM410 313h3v1h-3zM416 313h3v1h-3zM422 313h3v1h-3zM428 313h3v1h-3zM434 313h3v1h-3zM440 313h3v1h-3zM446 313h3v1h-3zM452 313h3v1h-3zM458 313h3v1h-3zM464 313h3v1h-3zM470 313h3v1h-3zM476 313h3v1h-3zM482 313h3v1h-3zM488 313h3v1h-3zM494 313h3v1h-3zM500 313h3v1h-3zM506 313h3v1h-3zM512 313h3v1h-3zM518 313h3v1h-3zM524 313h3v1h-3zM530 313h3v1h-3zM536 313h3v1h-3zM542 313h3v1h-3zM548 313h3v1h-3zM554 313h3v1h-3zM560 313h3v1h-3zM566 313h3v1h-3zM572 313h3v1h-3zM578 313h3v1h-3zM584 313h3v1h-3zM590 313h3v1h-3zM596 313h3v1h-3zM602 313h3v1h-3zM608 313h3v1h-3zM614 313h3v1h-3zM620 313h3v1h-3zM626 313h3v1h-3zM632 313h3v1h-3zM638 313h3v1h-3zM644 313h3v1h-3zM650 313h3v1h-3zM656 313h3v1h-3zM662 313h3v1h-3zM668 313h3v1h-3zM674 313h3v1h-3z"/><path fill="#c0c0c0" d="M14 331h3v1h-3zM20 331h3v1h-3zM26 331h3v1h-3zM32 331h3v1h-3zM38 331h3v1h-3zM44 331h3v1h-3zM50 331h3v1h-3zM56 331h3v1h-3zM62 331h3v1h-3zM68 331h3v1h-3zM74 331h3v1h-3zM80 331h3v1h-3zM86 331h3v1h-3zM92 331h3v1h-3zM98 331h3v1h-3zM104 331h3v1h-3zM110 331h3v1h-3zM116 331h3v1h-3zM122 331h3v1h-3zM128 331h3v1h-3zM134 331h3v1h-3zM140 331h3v1h-3zM146 331h3v1h-3zM152 331h3v1h-3zM158 331h3v1h-3zM164 331h3v1h-3zM170 331h3v1h-3zM176 331h3v1h-3zM182 331h3v1h-3zM188 331h3v1h-3zM194 331h3v1h-3zM200 331h3v1h-3zM206 331h3v1h-3zM212 331h3v1h-3zM218 331h3v1h-3zM224 331h3v1h-3zM230 331h3v1h-3zM236 331h3v1h-3zM242 331h3v1h-3zM248 331h3v1h-3zM254 331h3v1h-3zM260 331h3v1h-3zM266 331h3v1h-3zM272 331h3v1h-3zM278 331h3v1h-3zM284 331h3v1h-3zM290 331h3v1h-3zM296 331h3v1h-3zM302 331h3v1h-3zM308 331h3v1h-3zM314 331h3v1h-3zM320 331h3v1h-3zM326 331h3v1h-3zM332 331h3v1h-3zM338 331h3v1h-3zM344 331h3v1h-3zM350 331h3v1h-3zM356 331h3v1h-3zM362 331h3v1h-3zM368 331h3v1h-3zM374 331h3v1h-3zM380 331h3v1h-3zM386 331h3v1h-3zM392 331h3v1h-3zM398 331h3v1h-3zM404 331h3v1h-3zM410 331h3v1h-3zM416 331h3v1h-3zM422 331h3v1h-3zM428 331h3v1h-3zM434 331h3v1h-3zM440 331h3v1h-3zM446 331h3v1h-3zM452 331h3v1h-3zM458 331h3v1h-3zM464 331h3v1h-3zM470 331h3v1h-3zM476 331h3v1h-3zM482 331h3v1h-3zM488 331h3v1h-3zM494 331h3v1h-3zM500 331h3v1h-3zM506 331h3v1h-3zM512 331h3v1h-3zM518 331h3v1h-3zM524 331h3v1h-3zM530 331h3v1h-3zM536 331h3v1h-3zM542 331h3v1h-3zM548 331h3v1h-3zM554 331h3v1h-3zM560 331h3v1h-3zM566 331h3v1h-3zM572 331h3v1h-3zM578 331h3v1h-3zM584 331h3v1h-3zM590 331h3v1h-3zM596 331h3v1h-3zM602 331h3v1h-3zM608 331h3v1h-3zM614 331h3v1h-3zM620 331h3v1h-3zM626 331h3v1h-3zM632 331h3v1h-3zM638 331h3v1h-3zM644 331h3v1h-3zM650 331h3v1h-3zM656 331h3v1h-3zM662 331h3v1h-3zM668 331h3v1h-3zM674 331h3v1h-3z"/><path fill="#c0c0c0" d="M14 388h3v1h-3zM20 388h3v1h-3zM26 388h3v1h-3zM32 388h3v1h-3zM38 388h3v1h-3zM44 388h3v1h-3zM50 388h3v1h-3zM56 388h3v1h-3zM62 388h3v1h-3zM68 388h3v1h-3zM74 388h3v1h-3zM80 388h3v1h-3zM86 388h3v1h-3zM92 388h3v1h-3zM98 388h3v1h-3zM104 388h3v1h-3zM110 388h3v1h-3zM116 388h3v1h-3zM122 388h3v1h-3zM128 388h3v1h-3zM134 388h3v1h-3zM140 388h3v1h-3zM146 388h3v1h-3zM152 388h3v1h-3zM158 388h3v1h-3zM164 388h3v1h-3zM170 388h3v1h-3zM176 388h3v1h-3zM182 388h3v1h-3zM188 388h3v1h-3zM194 388h3v1h-3zM200 388h3v1h-3zM206 388h3v1h-3zM212 388h3v1h-3zM218 388h3v1h-3zM224 388h3v1h-3zM230 388h3v1h-3zM236 388h3v1h-3zM242 388h3v1h-3zM248 388h3v1h-3zM254 388h3v1h-3zM260 388h3v1h-3zM266 388h3v1h-3zM272 388h3v1h-3zM278 388h3v1h-3zM284 388h3v1h-3zM290 388h3v1h-3zM296 388h3v1h-3zM302 388h3v1h-3zM308 388h3v1h-3zM314 388h3v1h-3zM320 388h3v1h-3zM326 388h3v1h-3zM332 388h3v1h-3zM338 388h3v1h-3zM344 388h3v1h-3zM350 388h3v1h-3zM356 388h3v1h-3zM362 388h3v1h-3zM368 388h3v1h-3zM374 388h3v1h-3zM380 388h3v1h-3zM386 388h3v1h-3zM392 388h3v1h-3zM398 388h3v1h-3zM404 388h3v1h-3zM410 388h3v1h-3zM416 388h3v1h-3zM422 388h3v1h-3zM428 388h3v1h-3zM434 388h3v1h-3zM440 388h3v1h-3zM446 388h3v1h-3zM452 388h3v1h-3zM458 388h3v1h-3zM464 388h3v1h-3zM470 388h3v1h-3zM476 388h3v1h-3zM482 388h3v1h-3zM488 388h3v1h-3zM494 388h3v1h-3zM500 388h3v1h-3zM506 388h3v1h-3zM512 388h3v1h-3zM518 388h3v1h-3zM524 388h3v1h-3zM530 388h3v1h-3zM536 388h3v1h-3zM542 388h3v1h-3zM548 388h3v1h-3zM554 388h3v1h-3zM560 388h3v1h-3zM566 388h3v1h-3zM572 388h3v1h-3zM578 388h3v1h-3zM584 388h3v1h-3zM590 388h3v1h-3zM596 388h3v1h-3zM602 388h3v1h-3zM608 388h3v1h-3zM614 388h3v1h-3zM620 388h3v1h-3zM626 388h3v1h-3zM632 388h3v1h-3zM638 388h3v1h-3zM644 388h3v1h-3zM650 388h3v1h-3zM656 388h3v1h-3zM662 388h3v1h-3zM668 388h3v1h-3zM674 388h3v1h-3z"/><path fill="#c0c0c0" d="M14 405h3v1h-3zM20 405h3v1h-3zM26 405h3v1h-3zM32 405h3v1h-3zM38 405h3v1h-3zM44 405h3v1h-3zM50 405h3v1h-3zM56 405h3v1h-3zM62 405h3v1h-3zM68 405h3v1h-3zM74 405h3v1h-3zM80 405h3v1h-3zM86 405h3v1h-3zM92 405h3v1h-3zM98 405h3v1h-3zM104 405h3v1h-3zM110 405h3v1h-3zM116 405h3v1h-3zM122 405h3v1h-3zM128 405h3v1h-3zM134 405h3v1h-3zM140 405h3v1h-3zM146 405h3v1h-3zM152 405h3v1h-3zM158 405h3v1h-3zM164 405h3v1h-3zM170 405h3v1h-3zM176 405h3v1h-3zM182 405h3v1h-3zM188 405h3v1h-3zM194 405h3v1h-3zM200 405h3v1h-3zM206 405h3v1h-3zM212 405h3v1h-3zM218 405h3v1h-3zM224 405h3v1h-3zM230 405h3v1h-3zM236 405h3v1h-3zM242 405h3v1h-3zM248 405h3v1h-3zM254 405h3v1h-3zM260 405h3v1h-3zM266 405h3v1h-3zM272 405h3v1h-3zM278 405h3v1h-3zM284 405h3v1h-3zM290 405h3v1h-3zM296 405h3v1h-3zM302 405h3v1h-3zM308 405h3v1h-3zM314 405h3v1h-3zM320 405h3v1h-3zM326 405h3v1h-3zM332 405h3v1h-3zM338 405h3v1h-3zM344 405h3v1h-3zM350 405h3v1h-3zM356 405h3v1h-3zM362 405h3v1h-3zM368 405h3v1h-3zM374 405h3v1h-3zM380 405h3v1h-3zM386 405h3v1h-3zM392 405h3v1h-3zM398 405h3v1h-3zM404 405h3v1h-3zM410 405h3v1h-3zM416 405h3v1h-3zM422 405h3v1h-3zM428 405h3v1h-3zM434 405h3v1h-3zM440 405h3v1h-3zM446 405h3v1h-3zM452 405h3v1h-3zM458 405h3v1h-3zM464 405h3v1h-3zM470 405h3v1h-3zM476 405h3v1h-3zM482 405h3v1h-3zM488 405h3v1h-3zM494 405h3v1h-3zM500 405h3v1h-3zM506 405h3v1h-3zM512 405h3v1h-3zM518 405h3v1h-3zM524 405h3v1h-3zM530 405h3v1h-3zM536 405h3v1h-3zM542 405h3v1h-3zM548 405h3v1h-3zM554 405h3v1h-3zM560 405h3v1h-3zM566 405h3v1h-3zM572 405h3v1h-3zM578 405h3v1h-3zM584 405h3v1h-3zM590 405h3v1h-3zM596 405h3v1h-3zM602 405h3v1h-3zM608 405h3v1h-3zM614 405h3v1h-3zM620 405h3v1h-3zM626 405h3v1h-3zM632 405h3v1h-3zM638 405h3v1h-3zM644 405h3v1h-3zM650 405h3v1h-3zM656 405h3v1h-3zM662 405h3v1h-3zM668 405h3v1h-3zM674 405h3v1h-3z"/><path fill="#778899" d="M14 359h3v1h-3zM20 359h3v1h-3zM26 359h3v1h-3zM32 359h3v1h-3zM38 359h3v1h-3zM44 359h3v1h-3zM50 359h3v1h-3zM56 359h3v1h-3zM62 359h3v1h-3zM68 359h3v1h-3zM74 359h3v1h-3zM80 359h3v1h-3zM86 359h3v1h-3zM92 359h3v1h-3zM98 359h3v1h-3zM104 359h3v1h-3zM110 359h3v1h-3zM116 359h3v1h-3zM122 359h3v1h-3zM128 359h3v1h-3zM134 359h3v1h-3zM140 359h3v1h-3zM146 359h3v1h-3zM152 359h3v1h-3zM158 359h3v1h-3zM164 359h3v1h-3zM170 359h3v1h-3zM176 359h3v1h-3zM182 359h3v1h-3zM188 359h3v1h-3zM194 359h3v1h-3zM200 359h3v1h-3zM206 359h3v1h-3zM212 359h3v1h-3zM218 359h3v1h-3zM224 359h3v1h-3zM230 359h3v1h-3zM236 359h3v1h-3zM242 359h3v1h-3zM248 359h3v1h-3zM254 359h3v1h-3zM260 359h3v1h-3zM266 359h3v1h-3zM272 359h3v1h-3zM278 359h3v1h-3zM284 359h3v1h-3zM290 359h3v1h-3zM296 359h3v1h-3zM302 359h3v1h-3zM308 359h3v1h-3zM314 359h3v1h-3zM320 359h3v1h-3zM326 359h3v1h-3zM332 359h3v1h-3zM338 359h3v1h-3zM344 359h3v1h-3zM350 359h3v1h-3zM356 359h3v1h-3zM362 359h3v1h-3zM368 359h3v1h-3zM374 359h3v1h-3zM380 359h3v1h-3zM386 359h3v1h-3zM392 359h3v1h-3zM398 359h3v1h-3zM404 359h3v1h-3zM410 359h3v1h-3zM416 359h3v1h-3zM422 359h3v1h-3zM428 359h3v1h-3zM434 359h3v1h-3zM440 359h3v1h-3zM446 359h3v1h-3zM452 359h3v1h-3zM458 359h3v1h-3zM464 359h3v1h-3zM470 359h3v1h-3zM476 359h3v1h-3zM482 359h3v1h-3zM488 359h3v1h-3zM494 359h3v1h-3zM500 359h3v1h-3zM506 359h3v1h-3zM512 359h3v1h-3zM518 359h3v1h-3zM524 359h3v1h-3zM530 359h3v1h-3zM536 359h3v1h-3zM542 359h3v1h-3zM548 359h3v1h-3zM554 359h3v1h-3zM560 359h3v1h-3zM566 359h3v1h-3zM572 359h3v1h-3zM578 359h3v1h-3zM584 359h3v1h-3zM590 359h3v1h-3zM596 359h3v1h-3zM602 359h3v1h-3zM608 359h3v1h-3zM614 359h3v1h-3zM620 359h3v1h-3zM626 359h3v1h-3zM632 359h3v1h-3zM638 359h3v1h-3zM644 359h3v1h-3zM650 359h3v1h-3zM656 359h3v1h-3zM662 359h3v1h-3zM668 359h3v1h-3zM674 359h3v1h-3z"/><path fill="#778899" d="M14 443h3v1h-3zM20 443h3v1h-3zM26 443h3v1h-3zM32 443h3v1h-3zM38 443h3v1h-3zM44 443h3v1h-3zM50 443h3v1h-3zM56 443h3v1h-3zM62 443h3v1h-3zM68 443h3v1h-3zM74 443h3v1h-3zM80 443h3v1h-3zM86 443h3v1h-3zM92 443h3v1h-3zM98 443h3v1h-3zM104 443h3v1h-3zM110 443h3v1h-3zM116 443h3v1h-3zM122 443h3v1h-3zM128 443h3v1h-3zM134 443h3v1h-3zM140 443h3v1h-3zM146 443h3v1h-3zM152 443h3v1h-3zM158 443h3v1h-3zM164 443h3v1h-3zM170 443h3v1h-3zM176 443h3v1h-3zM182 443h3v1h-3zM188 443h3v1h-3zM194 443h3v1h-3zM200 443h3v1h-3zM206 443h3v1h-3zM212 443h3v1h-3zM218 443h3v1h-3zM224 443h3v1h-3zM230 443h3v1h-3zM236 443h3v1h-3zM242 443h3v1h-3zM248 443h3v1h-3zM254 443h3v1h-3zM260 443h3v1h-3zM266 443h3v1h-3zM272 443h3v1h-3zM278 443h3v1h-3zM284 443h3v1h-3zM290 443h3v1h-3zM296 443h3v1h-3zM302 443h3v1h-3zM308 443h3v1h-3zM314 443h3v1h-3zM320 443h3v1h-3zM326 443h3v1h-3zM332 443h3v1h-3zM338 443h3v1h-3zM344 443h3v1h-3zM350 443h3v1h-3zM356 443h3v1h-3zM362 443h3v1h-3zM368 443h3v1h-3zM374 443h3v1h-3zM380 443h3v1h-3zM386 443h3v1h-3zM392 443h3v1h-3zM398 443h3v1h-3zM404 443h3v1h-3zM410 443h3v1h-3zM416 443h3v1h-3zM422 443h3v1h-3zM428 443h3v1h-3zM434 443h3v1h-3zM440 443h3v1h-3zM446 443h3v1h-3zM452 443h3v1h-3zM458 443h3v1h-3zM464 443h3v1h-3zM470 443h3v1h-3zM476 443h3v1h-3zM482 443h3v1h-3zM488 443h3v1h-3zM494 443h3v1h-3zM500 443h3v1h-3zM506 443h3v1h-3zM512 443h3v1h-3zM518 443h3v1h-3zM524 443h3v1h-3zM530 443h3v1h-3zM536 443h3v1h-3zM542 443h3v1h-3zM548 443h3v1h-3zM554 443h3v1h-3zM560 443h3v1h-3zM566 443h3v1h-3zM572 443h3v1h-3zM578 443h3v1h-3zM584 443h3v1h-3zM590 443h3v1h-3zM596 443h3v1h-3zM602 443h3v1h-3zM608 443h3v1h-3zM614 443h3v1h-3zM620 443h3v1h-3zM626 443h3v1h-3zM632 443h3v1h-3zM638 443h3v1h-3zM644 443h3v1h-3zM650 443h3v1h-3zM656 443h3v1h-3zM662 443h3v1h-3zM668 443h3v1h-3zM674 443h3v1h-3z"/><path d="M547 34H557L552 39Z" fill="#778899" shape-rendering="auto"/><path d="M13 546V551H18Z" fill="#778899" shape-rendering="auto"/><svg x="13" y="34" width="666" height="253" viewBox="13 34 666 253" overflow="hidden"><rect x="13" y="77" width="1" height="7" fill="#00ff00"/><rect x="11" y="80" width="5" height="2" fill="#00ff00"/><rect x="21" y="78" width="1" height="7" fill="#00ff00"/><rect x="19" y="79" width="5" height="2" fill="#00ff00"/><rect x="29" y="77" width="1" height="7" fill="#00ff00"/><rect x="27" y="80" width="5" height="1" fill="#00ff00"/><rect x="37" y="74" width="1" height="8" fill="#00ff00"/><rect x="35" y="80" width="5" height="1" fill="#00ff00"/><rect x="45" y="77" width="1" height="7" fill="#00ff00"/><rect x="43" y="80" width="5" height="3" fill="#00ff00"/><rect x="44" y="81" width="3" height="1" fill="#ffffff"/><rect x="53" y="62" width="1" height="21" fill="#00ff00"/><rect x="51" y="63" width="5" height="20" fill="#00ff00"/><rect x="52" y="64" width="3" height="18" fill="#000000"/><rect x="61" y="61" width="1" height="10" fill="#00ff00"/><rect x="59" y="64" width="5" height="5" fill="#00ff00"/><rect x="60" y="65" width="3" height="3" fill="#ffffff"/><rect x="69" y="61" width="1" height="10" fill="#00ff00"/><rect x="67" y="67" width="5" height="2" fill="#00ff00"/><rect x="77" y="67" width="1" height="14" fill="#00ff00"/><rect x="75" y="67" width="5" height="10" fill="#00ff00"/><rect x="76" y="68" width="3" height="8" fill="#ffffff"/><rect x="85" y="75" width="1" height="30" fill="#00ff00"/><rect x="83" y="75" width="5" height="28" fill="#00ff00"/><rect x="84" y="76" width="3" height="26" fill="#ffffff"/><rect x="93" y="92" width="1" height="11" fill="#00ff00"/><rect x="91" y="94" width="5" height="9" fill="#00ff00"/><rect x="92" y="95" width="3" height="7" fill="#000000"/><rect x="101" y="84" width="1" height="11" fill="#00ff00"/><rect x="99" y="86" width="5" height="8" fill="#00ff00"/><rect x="100" y="87" width="3" height="6" fill="#000000"/><rect x="109" y="78" width="1" height="11" fill="#00ff00"/><rect x="107" y="85" width="5" height="2" fill="#00ff00"/><rect x="117" y="81" width="1" height="10" fill="#00ff00"/><rect x="115" y="86" width="5" height="3" fill="#00ff00"/><rect x="116" y="87" width="3" height="1" fill="#ffffff"/><rect x="125" y="72" width="1" height="19" fill="#00ff00"/><rect x="123" y="75" width="5" height="15" fill="#00ff00"/><rect x="124" y="76" width="3" height="13" fill="#000000"/><rect x="133" y="58" width="1" height="23" fill="#00ff00"/><rect x="131" y="69" width="5" height="6" fill="#00ff00"/><rect x="132" y="70" width="3" height="4" fill="#000000"/><rect x="141" y="63" width="1" height="12" fill="#00ff00"/><rect x="139" y="64" width="5" height="6" fill="#00ff00"/><rect x="140" y="65" width="3" height="4" fill="#000000"/><rect x="149" y="62" width="1" height="10" fill="#00ff00"/><rect x="147" y="65" width="5" height="1" fill="#00ff00"/><rect x="157" y="57" width="1" height="16" fill="#00ff00"/><rect x="155" y="64" width="5" height="7" fill="#00ff00"/><rect x="156" y="65" width="3" height="5" fill="#ffffff"/><rect x="165" y="59" width="1" height="12" fill="#00ff00"/><rect x="163" y="60" width="5" height="10" fill="#00ff00"/><rect x="164" y="61" width="3" height="8" fill="#000000"/><rect x="173" y="59" width="1" height="23" fill="#00ff00"/><rect x="171" y="59" width="5" height="18" fill="#00ff00"/><rect x="172" y="60" width="3" height="16" fill="#ffffff"/><rect x="181" y="63" width="1" height="17" fill="#00ff00"/><rect x="179" y="70" width="5" height="6" fill="#00ff00"/><rect x="180" y="71" width="3" height="4" fill="#000000"/><rect x="189" y="57" width="1" height="16" fill="#00ff00"/><rect x="187" y="57" width="5" height="14" fill="#00ff00"/><rect x="188" y="58" width="3" height="12" fill="#000000"/><rect x="197" y="47" width="1" height="17" fill="#00ff00"/><rect x="195" y="57" width="5" height="6" fill="#00ff00"/><rect x="196" y="58" width="3" height="4" fill="#ffffff"/><rect x="205" y="49" width="1" height="15" fill="#00ff00"/><rect x="203" y="54" width="5" height="10" fill="#00ff00"/><rect x="204" y="55" width="3" height="8" fill="#000000"/><rect x="213" y="53" width="1" height="20" fill="#00ff00"/><rect x="211" y="53" width="5" height="17" fill="#00ff00"/><rect x="212" y="54" width="3" height="15" fill="#ffffff"/><rect x="221" y="60" width="1" height="16" fill="#00ff00"/><rect x="219" y="69" width="5" height="6" fill="#00ff00"/><rect x="220" y="70" width="3" height="4" fill="#ffffff"/><rect x="229" y="64" width="1" height="12" fill="#00ff00"/><rect x="227" y="70" width="5" height="4" fill="#00ff00"/><rect x="228" y="71" width="3" height="2" fill="#000000"/><rect x="237" y="62" width="1" height="15" fill="#00ff00"/><rect x="235" y="72" width="5" height="3" fill="#00ff00"/><rect x="236" y="73" width="3" height="1" fill="#ffffff"/><rect x="245" y="73" width="1" height="16" fill="#00ff00"/><rect x="243" y="74" width="5" height="9" fill="#00ff00"/><rect x="244" y="75" width="3" height="7" fill="#ffffff"/><rect x="253" y="74" width="1" height="12" fill="#00ff00"/><rect x="251" y="81" width="5" height="2" fill="#00ff00"/><rect x="261" y="74" width="1" height="14" fill="#00ff00"/><rect x="259" y="76" width="5" height="8" fill="#00ff00"/><rect x="260" y="77" width="3" height="6" fill="#000000"/><rect x="269" y="75" width="1" height="19" fill="#00ff00"/><rect x="267" y="76" width="5" height="18" fill="#00ff00"/><rect x="268" y="77" width="3" height="16" fill="#ffffff"/><rect x="277" y="91" width="1" height="30" fill="#00ff00"/><rect x="275" y="93" width="5" height="25" fill="#00ff00"/><rect x="276" y="94" width="3" height="23" fill="#ffffff"/><rect x="285" y="105" width="1" height="14" fill="#00ff00"/><rect x="283" y="107" width="5" height="10" fill="#00ff00"/><rect x="284" y="108" width="3" height="8" fill="#000000"/><rect x="293" y="104" width="1" height="39" fill="#00ff00"/><rect x="291" y="107" width="5" height="31" fill="#00ff00"/><rect x="292" y="108" width="3" height="29" fill="#ffffff"/><rect x="301" y="137" width="1" height="22" fill="#00ff00"/><rect x="299" y="137" width="5" height="19" fill="#00ff00"/><rect x="300" y="138" width="3" height="17" fill="#ffffff"/><rect x="309" y="153" width="1" height="28" fill="#00ff00"/><rect x="307" y="156" width="5" height="13" fill="#00ff00"/><rect x="308" y="157" width="3" height="11" fill="#ffffff"/><rect x="317" y="164" width="1" height="26" fill="#00ff00"/><rect x="315" y="167" width="5" height="6" fill="#00ff00"/><rect x="316" y="168" width="3" height="4" fill="#ffffff"/><rect x="325" y="169" width="1" height="28" fill="#00ff00"/><rect x="323" y="173" width="5" height="17" fill="#00ff00"/><rect x="324" y="174" width="3" height="15" fill="#ffffff"/><rect x="333" y="177" width="1" height="47" fill="#00ff00"/><rect x="331" y="189" width="5" height="5" fill="#00ff00"/><rect x="332" y="190" width="3" height="3" fill="#ffffff"/><rect x="341" y="156" width="1" height="42" fill="#00ff00"/><rect x="339" y="158" width="5" height="39" fill="#00ff00"/><rect x="340" y="159" width="3" height="37" fill="#000000"/><rect x="349" y="153" width="1" height="23" fill="#00ff00"/><rect x="347" y="158" width="5" height="7" fill="#00ff00"/><rect x="348" y="159" width="3" height="5" fill="#ffffff"/><rect x="357" y="152" width="1" height="30" fill="#00ff00"/><rect x="355" y="163" width="5" height="7" fill="#00ff00"/><rect x="356" y="164" width="3" height="5" fill="#ffffff"/><rect x="365" y="162" width="1" height="25" fill="#00ff00"/><rect x="363" y="167" width="5" height="2" fill="#00ff00"/><rect x="373" y="146" width="1" height="26" fill="#00ff00"/><rect x="371" y="157" width="5" height="11" fill="#00ff00"/><rect x="372" y="158" width="3" height="9" fill="#000000"/><rect x="381" y="146" width="1" height="16" fill="#00ff00"/><rect x="379" y="156" width="5" height="5" fill="#00ff00"/><rect x="380" y="157" width="3" height="3" fill="#ffffff"/><rect x="389" y="157" width="1" height="40" fill="#00ff00"/><rect x="387" y="161" width="5" height="35" fill="#00ff00"/><rect x="388" y="162" width="3" height="33" fill="#ffffff"/><rect x="397" y="179" width="1" height="25" fill="#00ff00"/><rect x="395" y="181" width="5" height="14" fill="#00ff00"/><rect x="396" y="182" width="3" height="12" fill="#000000"/><rect x="405" y="175" width="1" height="20" fill="#00ff00"/><rect x="403" y="183" width="5" height="12" fill="#00ff00"/><rect x="404" y="184" width="3" height="10" fill="#ffffff"/><rect x="413" y="193" width="1" height="33" fill="#00ff00"/><rect x="411" y="193" width="5" height="10" fill="#00ff00"/><rect x="412" y="194" width="3" height="8" fill="#ffffff"/><rect x="421" y="202" width="1" height="50" fill="#00ff00"/><rect x="419" y="202" width="5" height="48" fill="#00ff00"/><rect x="420" y="203" width="3" height="46" fill="#ffffff"/><rect x="429" y="223" width="1" height="28" fill="#00ff00"/><rect x="427" y="228" width="5" height="21" fill="#00ff00"/><rect x="428" y="229" width="3" height="19" fill="#000000"/><rect x="437" y="186" width="1" height="52" fill="#00ff00"/><rect x="435" y="194" width="5" height="34" fill="#00ff00"/><rect x="436" y="195" width="3" height="32" fill="#000000"/><rect x="445" y="189" width="1" height="36" fill="#00ff00"/><rect x="443" y="195" width="5" height="26" fill="#00ff00"/><rect x="444" y="196" width="3" height="24" fill="#ffffff"/><rect x="453" y="219" width="1" height="53" fill="#00ff00"/><rect x="451" y="221" width="5" height="45" fill="#00ff00"/><rect x="452" y="222" width="3" height="43" fill="#ffffff"/><rect x="461" y="241" width="1" height="34" fill="#00ff00"/><rect x="459" y="242" width="5" height="24" fill="#00ff00"/><rect x="460" y="243" width="3" height="22" fill="#000000"/><rect x="469" y="235" width="1" height="29" fill="#00ff00"/><rect x="467" y="242" width="5" height="20" fill="#00ff00"/><rect x="468" y="243" width="3" height="18" fill="#ffffff"/><rect x="477" y="245" width="1" height="20" fill="#00ff00"/><rect x="475" y="250" width="5" height="12" fill="#00ff00"/><rect x="476" y="251" width="3" height="10" fill="#000000"/><rect x="485" y="237" width="1" height="37" fill="#00ff00"/><rect x="483" y="249" width="5" height="17" fill="#00ff00"/><rect x="484" y="250" width="3" height="15" fill="#ffffff"/><rect x="493" y="256" width="1" height="25" fill="#00ff00"/><rect x="491" y="265" width="5" height="12" fill="#00ff00"/><rect x="492" y="266" width="3" height="10" fill="#ffffff"/><rect x="501" y="267" width="1" height="15" fill="#00ff00"/><rect x="499" y="270" width="5" height="9" fill="#00ff00"/><rect x="500" y="271" width="3" height="7" fill="#000000"/><rect x="509" y="256" width="1" height="16" fill="#00ff00"/><rect x="507" y="262" width="5" height="9" fill="#00ff00"/><rect x="508" y="263" width="3" height="7" fill="#000000"/><rect x="517" y="245" width="1" height="18" fill="#00ff00"/><rect x="515" y="250" width="5" height="13" fill="#00ff00"/><rect x="516" y="251" width="3" height="11" fill="#000000"/><rect x="525" y="225" width="1" height="31" fill="#00ff00"/><rect x="523" y="236" width="5" height="15" fill="#00ff00"/><rect x="524" y="237" width="3" height="13" fill="#000000"/><rect x="533" y="231" width="1" height="20" fill="#00ff00"/><rect x="531" y="236" width="5" height="8" fill="#00ff00"/><rect x="532" y="237" width="3" height="6" fill="#ffffff"/><rect x="541" y="235" width="1" height="17" fill="#00ff00"/><rect x="539" y="240" width="5" height="4" fill="#00ff00"/><rect x="540" y="241" width="3" height="2" fill="#000000"/><rect x="549" y="240" width="1" height="18" fill="#00ff00"/><rect x="547" y="240" width="5" height="14" fill="#00ff00"/><rect x="548" y="241" width="3" height="12" fill="#ffffff"/><rect x="557" y="206" width="1" height="52" fill="#00ff00"/><rect x="555" y="209" width="5" height="45" fill="#00ff00"/><rect x="556" y="210" width="3" height="43" fill="#000000"/><rect x="565" y="191" width="1" height="28" fill="#00ff00"/><rect x="563" y="195" width="5" height="15" fill="#00ff00"/><rect x="564" y="196" width="3" height="13" fill="#000000"/><rect x="573" y="161" width="1" height="38" fill="#00ff00"/><rect x="571" y="178" width="5" height="19" fill="#00ff00"/><rect x="572" y="179" width="3" height="17" fill="#000000"/><rect x="581" y="169" width="1" height="35" fill="#00ff00"/><rect x="579" y="178" width="5" height="22" fill="#00ff00"/><rect x="580" y="179" width="3" height="20" fill="#ffffff"/><rect x="589" y="176" width="1" height="28" fill="#00ff00"/><rect x="587" y="176" width="5" height="24" fill="#00ff00"/><rect x="588" y="177" width="3" height="22" fill="#000000"/><rect x="597" y="167" width="1" height="35" fill="#00ff00"/><rect x="595" y="176" width="5" height="19" fill="#00ff00"/><rect x="596" y="177" width="3" height="17" fill="#ffffff"/><rect x="605" y="191" width="1" height="24" fill="#00ff00"/><rect x="603" y="194" width="5" height="20" fill="#00ff00"/><rect x="604" y="195" width="3" height="18" fill="#ffffff"/><rect x="613" y="191" width="1" height="26" fill="#00ff00"/><rect x="611" y="192" width="5" height="22" fill="#00ff00"/><rect x="612" y="193" width="3" height="20" fill="#000000"/><rect x="621" y="192" width="1" height="20" fill="#00ff00"/><rect x="619" y="192" width="5" height="7" fill="#00ff00"/><rect x="620" y="193" width="3" height="5" fill="#ffffff"/><rect x="629" y="194" width="1" height="22" fill="#00ff00"/><rect x="627" y="199" width="5" height="17" fill="#00ff00"/><rect x="628" y="200" width="3" height="15" fill="#ffffff"/><rect x="637" y="209" width="1" height="19" fill="#00ff00"/><rect x="635" y="213" width="5" height="4" fill="#00ff00"/><rect x="636" y="214" width="3" height="2" fill="#ffffff"/><rect x="645" y="212" width="1" height="21" fill="#00ff00"/><rect x="643" y="216" width="5" height="13" fill="#00ff00"/><rect x="644" y="217" width="3" height="11" fill="#ffffff"/><rect x="653" y="220" width="1" height="14" fill="#00ff00"/><rect x="651" y="228" width="5" height="4" fill="#00ff00"/><rect x="652" y="229" width="3" height="2" fill="#ffffff"/><rect x="661" y="231" width="1" height="18" fill="#00ff00"/><rect x="659" y="232" width="5" height="14" fill="#00ff00"/><rect x="660" y="233" width="3" height="12" fill="#ffffff"/><rect x="669" y="219" width="1" height="26" fill="#00ff00"/><rect x="667" y="220" width="5" height="25" fill="#00ff00"/><rect x="668" y="221" width="3" height="23" fill="#000000"/><rect x="677" y="207" width="1" height="17" fill="#00ff00"/><rect x="675" y="212" width="5" height="10" fill="#00ff00"/><rect x="676" y="213" width="3" height="8" fill="#000000"/></svg><g shape-rendering="auto" fill="#ff0000"><path d="M268.8 61 L270.6 64.9 L275 64.5 L272.5 68 L275 71.5 L270.6 71.1 L268.8 75 L267 71.1 L262.6 71.5 L265.1 68 L262.6 64.5 L267 64.9 Z"/></g><path d="M277.5 63V82" stroke="#ff0000" stroke-width="3.5" fill="none" shape-rendering="auto"/><path d="M269.5 73L277.5 83.5L286.8 71.8" stroke="#ff0000" stroke-width="3" stroke-linejoin="bevel" fill="none" shape-rendering="auto"/><svg x="13" y="290" width="666" height="127" viewBox="13 290 666 127" overflow="hidden"><polyline points="13,351 21,331.5 29,337 37,350 45,384.5 53,354.5 61,326 69,322.5 77,322 85,350 93,371 101,389 109,395 117,398.5 125,377.5 133,352.5 141,320 149,306.5 157,310.5 165,311 173,328 181,344 189,344.5 197,344.5 205,332.5 213,338.5 221,353.5 229,369 237,369 245,402 253,410.5 261,410.5 269,410.5 277,410.5 285,410.5 293,412 301,412 309,412 317,415.5 325,415.5 333,415.5 341,403 349,392.5 357,382.5 365,364 373,327 381,321 389,351 397,367.5 405,394 413,400.5 421,405.5 429,409.5 437,402 445,396.5 453,396 461,399 469,398 477,395 485,394.5 493,403 501,405 509,394 517,370.5 525,359 533,332.5 541,323 549,317 557,313.5 565,313.5 573,313.5 581,317 589,313 597,312 605,331 613,337.5 621,355.5 629,385 637,398 645,400 653,411.5 661,411.5 669,408.5 677,392" fill="none" stroke="#ff0000" stroke-width="2.2" stroke-linejoin="round"/><polyline points="13,328 21,331 29,335 37,339.5 45,345 53,345.5 61,347.5 69,350.5 77,354.5 85,367 93,367 101,364.5 109,362.5 117,365 125,358 133,353.5 141,351 149,347 157,339.5 165,339 173,340 181,340.5 189,334 197,331 205,329 213,329 221,331 229,334 237,338 245,344 253,352 261,350.5 269,352.5 277,355.5 285,361.5 293,372 301,383.5 309,391.5 317,399 325,405.5 333,409.5 341,410 349,410 357,410 365,410 373,410 381,410 389,410 397,410 405,410 413,410 421,410 429,410 437,409.5 445,409.5 453,409.5 461,409.5 469,409.5 477,409.5 485,408.5 493,408 501,408.8 509,408.8 517,408.8 525,408.8 533,406.5 541,405 549,403 557,397.5 565,392 573,381 581,374 589,360 597,351 605,344 613,337.5 621,329 629,327 637,326 645,319.5 653,318.8 661,324.5 669,325.3 677,328.4" fill="none" stroke="#00ffff" stroke-width="2.2" stroke-linejoin="round"/><polyline points="13,368 21,365.7 29,362 37,358 45,355 53,352.7 61,349.5 69,346.5 77,344.2 85,344.2 93,344.2 101,345.4 109,346 117,349.5 125,352.3 133,352.7 141,352.7 149,351.8 157,347.7 165,342.6 173,337.7 181,333.5 189,329.7 197,327.4 205,324.6 213,325.1 221,326.4 229,327.4 237,329.2 245,333.4 253,336.1 261,338.4 269,344.2 277,351.8 285,358 293,362 301,362.7 309,363.4 317,365 325,367.3 333,369.6 341,372 349,375.8 357,380 365,382.3 373,385 381,388 389,391.5 397,392.2 405,395 413,398 421,400.3 429,401.9 437,403 445,404.9 453,405.8 461,407.2 469,408.1 477,408.8 485,409.5 493,409.5 501,409.8 509,411.1 517,412.3 525,412.7 533,413.4 541,414.1 549,414.1 557,413.4 565,412.7 573,411.8 581,410.4 589,408.1 597,406.5 605,405.3 613,403.5 621,401.9 629,401.2 637,399.4 645,397.6 653,396 661,394.9 669,393.8 677,392.2" fill="none" stroke="#ffff00" stroke-width="2.2" stroke-linejoin="round"/></svg><svg x="13" y="420" width="666" height="131" viewBox="13 420 666 131" overflow="hidden"><rect x="12" y="437" width="3" height="6" fill="#c0c0c0"/><rect x="20" y="437" width="3" height="6" fill="#c0c0c0"/><rect x="28" y="437" width="3" height="6" fill="#c0c0c0"/><rect x="36" y="437" width="3" height="6" fill="#c0c0c0"/><rect x="44" y="437" width="3" height="6" fill="#c0c0c0"/><rect x="52" y="434" width="3" height="9" fill="#c0c0c0"/><rect x="60" y="432" width="3" height="11" fill="#c0c0c0"/><rect x="68" y="432" width="3" height="11" fill="#c0c0c0"/><rect x="76" y="432" width="3" height="11" fill="#c0c0c0"/><rect x="84" y="439" width="3" height="4" fill="#c0c0c0"/><rect x="100" y="443" width="3" height="2" fill="#c0c0c0"/><rect x="108" y="443" width="3" height="2" fill="#c0c0c0"/><rect x="116" y="443" width="3" height="4" fill="#c0c0c0"/><rect x="132" y="442" width="3" height="1" fill="#c0c0c0"/><rect x="140" y="437" width="3" height="6" fill="#c0c0c0"/><rect x="148" y="434" width="3" height="9" fill="#c0c0c0"/><rect x="156" y="434" width="3" height="9" fill="#c0c0c0"/><rect x="164" y="431" width="3" height="12" fill="#c0c0c0"/><rect x="172" y="432" width="3" height="11" fill="#c0c0c0"/><rect x="180" y="432" width="3" height="11" fill="#c0c0c0"/><rect x="188" y="430" width="3" height="13" fill="#c0c0c0"/><rect x="196" y="429" width="3" height="14" fill="#c0c0c0"/><rect x="204" y="426" width="3" height="17" fill="#c0c0c0"/><rect x="212" y="428" width="3" height="15" fill="#c0c0c0"/><rect x="220" y="431" width="3" height="12" fill="#c0c0c0"/><rect x="228" y="432" width="3" height="11" fill="#c0c0c0"/><rect x="236" y="434" width="3" height="9" fill="#c0c0c0"/><rect x="244" y="438" width="3" height="5" fill="#c0c0c0"/><rect x="252" y="440" width="3" height="3" fill="#c0c0c0"/><rect x="260" y="441" width="3" height="2" fill="#c0c0c0"/><rect x="268" y="443" width="3" height="4" fill="#c0c0c0"/><rect x="276" y="443" width="3" height="13" fill="#c0c0c0"/><rect x="284" y="443" width="3" height="17" fill="#c0c0c0"/><rect x="292" y="443" width="3" height="28" fill="#c0c0c0"/><rect x="300" y="443" width="3" height="40" fill="#c0c0c0"/><rect x="308" y="443" width="3" height="51" fill="#c0c0c0"/><rect x="316" y="443" width="3" height="61" fill="#c0c0c0"/><rect x="324" y="443" width="3" height="72" fill="#c0c0c0"/><rect x="332" y="443" width="3" height="80" fill="#c0c0c0"/><rect x="340" y="443" width="3" height="78" fill="#c0c0c0"/><rect x="348" y="443" width="3" height="77" fill="#c0c0c0"/><rect x="356" y="443" width="3" height="76" fill="#c0c0c0"/><rect x="364" y="443" width="3" height="74" fill="#c0c0c0"/><rect x="372" y="443" width="3" height="69" fill="#c0c0c0"/><rect x="380" y="443" width="3" height="66" fill="#c0c0c0"/><rect x="388" y="443" width="3" height="70" fill="#c0c0c0"/><rect x="396" y="443" width="3" height="70" fill="#c0c0c0"/><rect x="404" y="443" width="3" height="69" fill="#c0c0c0"/><rect x="412" y="443" width="3" height="73" fill="#c0c0c0"/><rect x="420" y="443" width="3" height="85" fill="#c0c0c0"/><rect x="428" y="443" width="3" height="88" fill="#c0c0c0"/><rect x="436" y="443" width="3" height="83" fill="#c0c0c0"/><rect x="444" y="443" width="3" height="82" fill="#c0c0c0"/><rect x="452" y="443" width="3" height="93" fill="#c0c0c0"/><rect x="460" y="443" width="3" height="94" fill="#c0c0c0"/><rect x="468" y="443" width="3" height="97" fill="#c0c0c0"/><rect x="476" y="443" width="3" height="96" fill="#c0c0c0"/><rect x="484" y="443" width="3" height="100" fill="#c0c0c0"/><rect x="492" y="443" width="3" height="103" fill="#c0c0c0"/><rect x="500" y="443" width="3" height="101" fill="#c0c0c0"/><rect x="508" y="443" width="3" height="99" fill="#c0c0c0"/><rect x="516" y="443" width="3" height="92" fill="#c0c0c0"/><rect x="524" y="443" width="3" height="84" fill="#c0c0c0"/><rect x="532" y="443" width="3" height="77" fill="#c0c0c0"/><rect x="540" y="443" width="3" height="69" fill="#c0c0c0"/><rect x="548" y="443" width="3" height="67" fill="#c0c0c0"/><rect x="556" y="443" width="3" height="54" fill="#c0c0c0"/><rect x="564" y="443" width="3" height="40" fill="#c0c0c0"/><rect x="572" y="443" width="3" height="25" fill="#c0c0c0"/><rect x="580" y="443" width="3" height="17" fill="#c0c0c0"/><rect x="588" y="443" width="3" height="6" fill="#c0c0c0"/><rect x="612" y="439" width="3" height="4" fill="#c0c0c0"/><rect x="620" y="437" width="3" height="6" fill="#c0c0c0"/><rect x="628" y="439" width="3" height="4" fill="#c0c0c0"/><rect x="636" y="441" width="3" height="2" fill="#c0c0c0"/><rect x="644" y="443" width="3" height="4" fill="#c0c0c0"/><rect x="652" y="443" width="3" height="8" fill="#c0c0c0"/><rect x="660" y="443" width="3" height="14" fill="#c0c0c0"/><rect x="668" y="443" width="3" height="13" fill="#c0c0c0"/><rect x="676" y="443" width="3" height="11" fill="#c0c0c0"/><polyline points="13,437 21,437 29,437 37,437 45,436 53,436 61,436 69,435 77,435 85,435 93,437 101,437 109,437 117,438 125,439 133,440 141,441 149,441 157,441 165,440 173,439.5 181,438 189,436.5 197,434 205,433 213,432 221,431.5 229,431 237,431 245,432 253,433 261,434 269,436 277,438.5 285,443 293,447.5 301,452 309,457.5 317,467 325,475 333,484 341,491.6 349,498.3 357,504.4 365,510 373,512.8 381,514.1 389,515.7 397,515.7 405,514.6 413,514.1 421,515 429,516.4 437,517.3 445,519.1 453,522.4 461,524.7 469,527.6 477,530.8 485,533.7 493,535.3 501,537.3 509,539.3 517,539.8 525,539.3 533,537.1 541,533.7 549,530.3 557,524.7 565,516.8 573,510 581,500 589,491 597,483 605,474 613,465 621,457 629,450.6 637,446.1 645,444.6 653,443.9 661,443.9 669,445.1 677,446.1" fill="none" stroke="#ff0000" stroke-width="2" stroke-linejoin="round"/></svg><path fill="#ffffff" d="M12 33H680V288H12Z M13 34V287H679V34Z" fill-rule="evenodd"/><path fill="#ffffff" d="M12 289H680V418H12Z M13 290V417H679V290Z" fill-rule="evenodd"/><path fill="#ffffff" d="M12 419H680V552H12Z M13 420V551H679V420Z" fill-rule="evenodd"/><rect x="680" y="53" width="2" height="1" fill="#ffffff"/><rect x="680" y="86" width="2" height="1" fill="#ffffff"/><rect x="680" y="119" width="2" height="1" fill="#ffffff"/><rect x="680" y="152" width="2" height="1" fill="#ffffff"/><rect x="680" y="185" width="2" height="1" fill="#ffffff"/><rect x="680" y="218" width="2" height="1" fill="#ffffff"/><rect x="680" y="251" width="2" height="1" fill="#ffffff"/><rect x="680" y="284" width="2" height="1" fill="#ffffff"/><rect x="680" y="359" width="2" height="1" fill="#ffffff"/><rect x="680" y="443" width="2" height="1" fill="#ffffff"/><rect x="680" y="290" width="1" height="2" fill="#ffffff"/><rect x="680" y="420" width="1" height="2" fill="#ffffff"/><rect x="13" y="552" width="1" height="3" fill="#ffffff"/><rect x="77" y="552" width="1" height="3" fill="#ffffff"/><rect x="141" y="552" width="1" height="3" fill="#ffffff"/><rect x="205" y="552" width="1" height="3" fill="#ffffff"/><rect x="269" y="552" width="1" height="3" fill="#ffffff"/><rect x="333" y="552" width="1" height="3" fill="#ffffff"/><rect x="397" y="552" width="1" height="3" fill="#ffffff"/><rect x="461" y="552" width="1" height="3" fill="#ffffff"/><rect x="525" y="552" width="1" height="3" fill="#ffffff"/><rect x="589" y="552" width="1" height="3" fill="#ffffff"/><rect x="653" y="552" width="1" height="3" fill="#ffffff"/><path d="M16 40H24L20 44.5Z" fill="#ffffff" shape-rendering="auto"/><g font-family="Liberation Sans, sans-serif" fill="#ffffff" shape-rendering="auto"><text x="28" y="45" font-size="10" textLength="52.96" lengthAdjust="spacingAndGlyphs">USDJPY,M5</text><text x="86" y="45" font-size="10" textLength="32.91" lengthAdjust="spacingAndGlyphs">134.617</text><text x="122" y="45" font-size="10" textLength="33.94" lengthAdjust="spacingAndGlyphs">134.639</text><text x="158" y="45" font-size="10" textLength="33.94" lengthAdjust="spacingAndGlyphs">134.613</text><text x="194" y="45" font-size="10" textLength="32.91" lengthAdjust="spacingAndGlyphs">134.637</text><text x="685" y="57" font-size="10" textLength="33.94" lengthAdjust="spacingAndGlyphs">129.265</text><text x="685" y="90" font-size="10" textLength="33.94" lengthAdjust="spacingAndGlyphs">129.095</text><text x="685" y="123" font-size="10" textLength="33.94" lengthAdjust="spacingAndGlyphs">128.925</text><text x="685" y="156" font-size="10" textLength="33.94" lengthAdjust="spacingAndGlyphs">128.760</text><text x="685" y="189" font-size="10" textLength="33.94" lengthAdjust="spacingAndGlyphs">128.590</text><text x="685" y="222" font-size="10" textLength="33.94" lengthAdjust="spacingAndGlyphs">128.420</text><text x="685" y="255" font-size="10" textLength="33.94" lengthAdjust="spacingAndGlyphs">128.250</text><text x="685" y="288" font-size="10" textLength="33.94" lengthAdjust="spacingAndGlyphs">128.085</text><text x="16" y="303" font-size="10" textLength="111.95" lengthAdjust="spacingAndGlyphs">R(9,26,52) -20.0 -15.4 -2.2</text><text x="17" y="432" font-size="10" textLength="131.95" lengthAdjust="spacingAndGlyphs">MACD(12,26,9) -0.0031 0.0015</text><text x="683" y="300" font-size="10" textLength="14.93" lengthAdjust="spacingAndGlyphs">120</text><text x="682" y="306" font-size="10" textLength="14.93" lengthAdjust="spacingAndGlyphs">100</text><text x="682" y="317" font-size="10" textLength="11.0" lengthAdjust="spacingAndGlyphs">80</text><text x="682" y="335" font-size="10" textLength="11.0" lengthAdjust="spacingAndGlyphs">50</text><text x="683" y="363" font-size="10" textLength="19.0" lengthAdjust="spacingAndGlyphs">0.00</text><text x="682" y="392" font-size="10" textLength="13.0" lengthAdjust="spacingAndGlyphs">-50</text><text x="682" y="409" font-size="10" textLength="14.0" lengthAdjust="spacingAndGlyphs">-80</text><text x="683" y="414" font-size="10" textLength="19.0" lengthAdjust="spacingAndGlyphs">-100</text><text x="683" y="430" font-size="10" textLength="29.0" lengthAdjust="spacingAndGlyphs">0.0396</text><text x="683" y="447" font-size="10" textLength="19.0" lengthAdjust="spacingAndGlyphs">0.00</text><text x="683" y="548" font-size="10" textLength="32.0" lengthAdjust="spacingAndGlyphs">-0.1935</text><text x="12" y="564" font-size="10" textLength="49.91" lengthAdjust="spacingAndGlyphs">13 Jan 2023</text><text x="76" y="564" font-size="10" textLength="52.91" lengthAdjust="spacingAndGlyphs">13 Jan 06:15</text><text x="140" y="564" font-size="10" textLength="52.91" lengthAdjust="spacingAndGlyphs">13 Jan 06:55</text><text x="204" y="564" font-size="10" textLength="52.91" lengthAdjust="spacingAndGlyphs">13 Jan 07:35</text><text x="268" y="564" font-size="10" textLength="52.91" lengthAdjust="spacingAndGlyphs">13 Jan 08:15</text><text x="332" y="564" font-size="10" textLength="52.91" lengthAdjust="spacingAndGlyphs">13 Jan 08:55</text><text x="396" y="564" font-size="10" textLength="52.91" lengthAdjust="spacingAndGlyphs">13 Jan 09:35</text><text x="460" y="564" font-size="10" textLength="52.91" lengthAdjust="spacingAndGlyphs">13 Jan 10:15</text><text x="524" y="564" font-size="10" textLength="52.91" lengthAdjust="spacingAndGlyphs">13 Jan 10:55</text><text x="588" y="564" font-size="10" textLength="52.93" lengthAdjust="spacingAndGlyphs">13 Jan 11:35</text><text x="652" y="564" font-size="10" textLength="52.91" lengthAdjust="spacingAndGlyphs">13 Jan 12:15</text></g></svg></body></html>
